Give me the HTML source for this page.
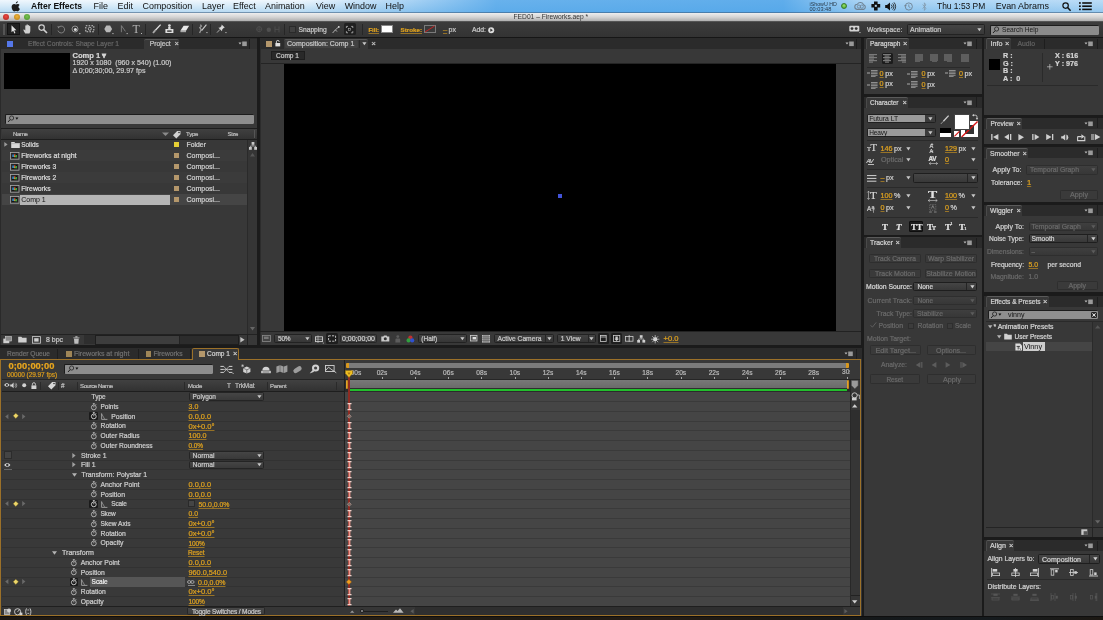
<!DOCTYPE html>
<html><head><meta charset="utf-8"><title>After Effects</title>
<style>
html,body{margin:0;padding:0;}
body{width:1103px;height:620px;overflow:hidden;background:#1b1b1b;position:relative;font-family:"Liberation Sans",sans-serif;}
div,span.t,svg{position:absolute;}
span.t{white-space:nowrap;-webkit-text-stroke:0.22px;}
svg{overflow:visible;}
#root{left:0;top:0;width:1103px;height:620px;will-change:transform;}
</style></head><body><div id="root">
<div style="left:0px;top:616px;width:1103px;height:4px;background:linear-gradient(90deg,#1c1712,#261e15 10%,#1a1611 22%,#271f15 35%,#1f1a13 48%,#241c14 60%,#1c1913 70%,#14181a 80%,#161b1e 90%,#1c1813 100%);"></div>
<div style="left:0px;top:616px;width:1103px;height:1px;background:#0e0e0e;"></div>
<div style="left:0px;top:0px;width:1103px;height:12.5px;background:linear-gradient(180deg,#f0f7fd 0%,#d6eaf8 45%,#b4d8f2 100%);"></div>
<div style="left:0px;top:0px;width:1103px;height:12.5px;background:linear-gradient(90deg,rgba(70,160,232,0) 0%,rgba(70,160,232,0) 27%,rgba(70,160,232,.35) 36%,rgba(70,160,232,.8) 45%,rgba(70,160,232,.85) 71%,rgba(70,160,232,.4) 78%,rgba(70,160,232,.3) 100%);"></div>
<div style="left:0px;top:12px;width:1103px;height:0.6px;background:rgba(60,90,120,.55);"></div>
<svg style="left:10.5px;top:0.8px;" width="10" height="11" viewBox="0 0 10 11"><path d="M6.9 0.2C6.9 1.4 5.9 2.5 4.8 2.4C4.7 1.3 5.8 0.2 6.9 0.2ZM8.6 3.9C7.9 4.3 7.5 5 7.5 5.8C7.5 6.8 8.1 7.5 8.9 7.8C8.5 9 7.6 10.4 6.7 10.4C6 10.4 5.7 10 4.9 10C4.1 10 3.7 10.4 3.1 10.4C2.1 10.4 0.6 8.2 0.6 6.1C0.6 4.1 1.9 3 3.1 3C3.9 3 4.5 3.5 5 3.5C5.5 3.5 6.2 2.9 7.1 3C7.6 3 8.2 3.3 8.6 3.9Z" fill="#1c1c1c"/></svg>
<span class="t" style="left:31px;top:0.05px;line-height:12px;font-size:8.58px;color:#111;font-weight:bold;-webkit-text-stroke:0;">After Effects</span>
<span class="t" style="left:93.5px;top:0.05px;line-height:12px;font-size:8.95px;color:#111;-webkit-text-stroke:0;">File</span>
<span class="t" style="left:117.5px;top:0.05px;line-height:12px;font-size:8.95px;color:#111;-webkit-text-stroke:0;">Edit</span>
<span class="t" style="left:142.5px;top:0.05px;line-height:12px;font-size:8.95px;color:#111;-webkit-text-stroke:0;">Composition</span>
<span class="t" style="left:202px;top:0.05px;line-height:12px;font-size:8.95px;color:#111;-webkit-text-stroke:0;">Layer</span>
<span class="t" style="left:233px;top:0.05px;line-height:12px;font-size:8.95px;color:#111;-webkit-text-stroke:0;">Effect</span>
<span class="t" style="left:265px;top:0.05px;line-height:12px;font-size:8.95px;color:#111;-webkit-text-stroke:0;">Animation</span>
<span class="t" style="left:316px;top:0.05px;line-height:12px;font-size:8.95px;color:#111;-webkit-text-stroke:0;">View</span>
<span class="t" style="left:344.7px;top:0.05px;line-height:12px;font-size:8.95px;color:#111;-webkit-text-stroke:0;">Window</span>
<span class="t" style="left:385.5px;top:0.05px;line-height:12px;font-size:8.95px;color:#111;-webkit-text-stroke:0;">Help</span>
<span class="t" style="left:937px;top:0.05px;line-height:12px;font-size:8.44px;color:#111;-webkit-text-stroke:0;">Thu 1:53 PM</span>
<span class="t" style="left:995.7px;top:0.05px;line-height:12px;font-size:8.96px;color:#111;-webkit-text-stroke:0;">Evan Abrams</span>
<span class="t" style="left:809.5px;top:0.55px;line-height:6px;font-size:5.3px;color:#2a3a4a;-webkit-text-stroke:0;">iShowU HD</span>
<span class="t" style="left:809.5px;top:5.85px;line-height:6px;font-size:5.6px;color:#2a3a4a;-webkit-text-stroke:0;">00:03:48</span>
<div style="left:841px;top:3.2px;width:6px;height:6px;background:radial-gradient(circle at 50% 35%,#9be06a,#3fa52c);border-radius:50%;border:0.5px solid #3a7a2a;box-sizing:border-box;"></div>
<svg style="left:853.6px;top:2.4px;" width="13" height="8" viewBox="0 0 13 8"><path d="M3.4 7.4a2.6 2.6 0 0 1 0-5.2 3.4 3.4 0 0 1 6.2 0.6 2.4 2.4 0 0 1 0 4.6z" fill="none" stroke="#6f8293" stroke-width="1.1"/><circle cx="5" cy="4.6" r="1.6" fill="none" stroke="#6f8293" stroke-width="0.8"/><circle cx="7.8" cy="4.6" r="1.6" fill="none" stroke="#6f8293" stroke-width="0.8"/></svg>
<svg style="left:870.6px;top:1.4px;" width="10" height="10" viewBox="0 0 10 10"><path d="M3 0.4h3.6v2.6h2.6v3.6H6.6v2.8H3V6.6H0.4V3H3z" fill="#111"/><rect x="3.8" y="3.8" width="2" height="2" fill="#b8d8f0"/></svg>
<svg style="left:884.6px;top:1.8px;" width="11.4" height="9" viewBox="0 0 11.4 9"><path d="M0.2 3h1.8L5 0.6v7.8L2 6H0.2z" fill="#111"/><path d="M6.2 2.6a2.6 2.6 0 0 1 0 3.8M7.6 1.4a4.4 4.4 0 0 1 0 6.2M9 0.4a6 6 0 0 1 0 8.2" stroke="#111" stroke-width="0.8" fill="none"/></svg>
<svg style="left:903.6px;top:1.8px;" width="9.4" height="9" viewBox="0 0 9.4 9"><circle cx="4.8" cy="4.5" r="3.6" fill="none" stroke="#6f8293" stroke-width="0.9"/><path d="M4.8 2.4v2.3l1.6 1" stroke="#6f8293" stroke-width="0.8" fill="none"/><path d="M0 3l1.4 1.8L3 3.4z" fill="#6f8293"/></svg>
<svg style="left:921.6px;top:1.6px;" width="5" height="9.4" viewBox="0 0 5 9.4"><path d="M0.6 2.6L4 6.2 2.4 8.4V0.8L4 3 0.6 6.6" stroke="#7f93a5" stroke-width="0.7" fill="none"/></svg>
<svg style="left:1061.5px;top:1.6px;" width="9.4" height="9.4" viewBox="0 0 9.4 9.4"><circle cx="3.6" cy="3.6" r="2.7" fill="none" stroke="#111" stroke-width="1.2"/><path d="M5.6 5.6L8.6 8.8" stroke="#111" stroke-width="1.5"/></svg>
<svg style="left:1078.6px;top:2px;" width="13" height="8.4" viewBox="0 0 13 8.4"><rect x="0" y="0.2" width="1.8" height="1.6" fill="#111"/><rect x="3.2" y="0.2" width="9.6" height="1.6" fill="#111"/><rect x="0" y="3.4" width="1.8" height="1.6" fill="#111"/><rect x="3.2" y="3.4" width="9.6" height="1.6" fill="#111"/><rect x="0" y="6.6" width="1.8" height="1.6" fill="#111"/><rect x="3.2" y="6.6" width="9.6" height="1.6" fill="#111"/></svg>
<div style="left:0px;top:12.5px;width:1103px;height:9px;background:linear-gradient(180deg,#eeeeee 0%,#d4d4d4 45%,#b0b0b0 88%,#8a8a8a 100%);"></div>
<div style="left:3.3px;top:13.8px;width:6px;height:6px;background:radial-gradient(circle at 50% 40%,#ee4a42,#a8221c);border-radius:50%;"></div>
<div style="left:13.899999999999999px;top:13.8px;width:6px;height:6px;background:radial-gradient(circle at 50% 40%,#f0b236,#b07c18);border-radius:50%;"></div>
<div style="left:24.2px;top:13.8px;width:6px;height:6px;background:radial-gradient(circle at 50% 40%,#78c250,#4a8f2a);border-radius:50%;"></div>
<span class="t" style="left:513.5px;top:11.25px;line-height:12px;font-size:6.69px;color:#333;-webkit-text-stroke:0;">FED01 – Fireworks.aep *</span>
<div style="left:0px;top:21.5px;width:1103px;height:15.5px;background:linear-gradient(180deg,#3c3c3c,#333333);"></div>
<div style="left:0px;top:21.3px;width:1103px;height:0.7px;background:#555;"></div>
<div style="left:0px;top:36.8px;width:1103px;height:1.2px;background:#161616;"></div>
<div style="left:0px;top:38px;width:257px;height:306.5px;background:#383838;"></div>
<div style="left:0px;top:38px;width:257px;height:11px;background:#2b2b2b;"></div>
<div style="left:259.5px;top:38px;width:601.5px;height:306.5px;background:#383838;"></div>
<div style="left:259.5px;top:38px;width:601.5px;height:11px;background:#2b2b2b;"></div>
<div style="left:0px;top:347.8px;width:861.5px;height:268.7px;background:#383838;"></div>
<div style="left:0px;top:347.8px;width:861.5px;height:11px;background:#2b2b2b;"></div>
<div style="left:863.7px;top:38px;width:118.2px;height:55.9px;background:#383838;"></div>
<div style="left:863.7px;top:38px;width:118.2px;height:11px;background:#2b2b2b;"></div>
<div style="left:863.7px;top:96.8px;width:118.2px;height:138px;background:#383838;"></div>
<div style="left:863.7px;top:96.8px;width:118.2px;height:11px;background:#2b2b2b;"></div>
<div style="left:863.7px;top:237px;width:118.2px;height:379.3px;background:#383838;"></div>
<div style="left:863.7px;top:237px;width:118.2px;height:11px;background:#2b2b2b;"></div>
<div style="left:984.3px;top:38px;width:118.7px;height:76.9px;background:#383838;"></div>
<div style="left:984.3px;top:38px;width:118.7px;height:11px;background:#2b2b2b;"></div>
<div style="left:984.3px;top:117.8px;width:118.7px;height:26.7px;background:#383838;"></div>
<div style="left:984.3px;top:117.8px;width:118.7px;height:11px;background:#2b2b2b;"></div>
<div style="left:984.3px;top:147.4px;width:118.7px;height:54.6px;background:#383838;"></div>
<div style="left:984.3px;top:147.4px;width:118.7px;height:11px;background:#2b2b2b;"></div>
<div style="left:984.3px;top:204.8px;width:118.7px;height:87.7px;background:#383838;"></div>
<div style="left:984.3px;top:204.8px;width:118.7px;height:11px;background:#2b2b2b;"></div>
<div style="left:984.3px;top:296px;width:118.7px;height:240.7px;background:#383838;"></div>
<div style="left:984.3px;top:296px;width:118.7px;height:11px;background:#2b2b2b;"></div>
<div style="left:984.3px;top:540px;width:118.7px;height:76.3px;background:#383838;"></div>
<div style="left:984.3px;top:540px;width:118.7px;height:11px;background:#2b2b2b;"></div>
<div style="left:6.8px;top:41px;width:6.2px;height:6.2px;background:#5577e8;"></div>
<span class="t" style="left:28px;top:38.05px;line-height:12px;font-size:6.69px;color:#666;">Effect Controls: Shape Layer 1</span>
<div style="left:144px;top:38.5px;width:35px;height:11px;background:#383838;border-top:0.6px solid #555;border-radius:2px 2px 0 0;"></div>
<span class="t" style="left:149.7px;top:38.05px;line-height:12px;font-size:6.75px;color:#c6c6c6;">Project</span>
<span class="t" style="left:174.4px;top:37.85px;line-height:12px;font-size:7.5px;color:#c6c6c6;">×</span>
<svg style="left:238px;top:41px;" width="10" height="6" viewBox="0 0 10 6"><path d="M0.5 1.5h3l-1.5 2z" fill="#bbb"/><rect x="4.2" y="0.5" width="4.6" height="4.6" fill="#9a9a9a"/></svg>
<div style="left:249.3px;top:38.5px;width:7.7px;height:10.5px;background:#323232;"></div>
<div style="left:248.5px;top:38.5px;width:0.8px;height:10px;background:#1e1e1e;"></div>
<div style="left:4px;top:52.7px;width:65.5px;height:36.6px;background:#000;"></div>
<span class="t" style="left:72.5px;top:49.85px;line-height:12px;font-size:7.6px;color:#d6d6d6;font-weight:bold;">Comp 1 ▾</span>
<span class="t" style="left:72.5px;top:57.45px;line-height:12px;font-size:7.07px;color:#c8c8c8;white-space:pre;">1920 x 1080  (960 x 540) (1.00)</span>
<span class="t" style="left:72.5px;top:64.85px;line-height:12px;font-size:7.1px;color:#c8c8c8;">Δ 0;00;30;00, 29.97 fps</span>
<div style="left:4.6px;top:113.6px;width:249px;height:10px;background:#8d8d8d;border-top:1px solid #1c1c1c;border-left:1px solid #1c1c1c;border-radius:1.5px;box-sizing:border-box;"></div>
<svg style="left:7px;top:115px;" width="12" height="8" viewBox="0 0 12 8"><circle cx="4.6" cy="3" r="2.1" fill="none" stroke="#222" stroke-width="0.8"/><path d="M3.2 4.6L1 7" stroke="#222" stroke-width="1"/><path d="M8.4 2.6h3l-1.5 2.2z" fill="#111"/></svg>
<div style="left:1.5px;top:129px;width:255.5px;height:10.3px;background:linear-gradient(180deg,#404040,#323232);"></div>
<div style="left:0px;top:128.3px;width:257px;height:0.8px;background:#1d1d1d;"></div>
<div style="left:0px;top:139.3px;width:257px;height:0.9px;background:#1d1d1d;"></div>
<span class="t" style="left:13px;top:127.95px;line-height:12px;font-size:6.0px;color:#bdbdbd;letter-spacing:-0.376px;">Name</span>
<svg style="left:162px;top:131.5px;" width="8" height="5" viewBox="0 0 8 5"><path d="M0 0.5h7l-3.5 3.6z" fill="#8a8a8a"/></svg>
<svg style="left:172px;top:129.8px;" width="10" height="9" viewBox="0 0 10 9"><path d="M1 5.2L5.2 1h3.3v3.3L4.3 8.5z" fill="#d0d0d0"/><circle cx="7" cy="2.5" r="0.8" fill="#333"/></svg>
<span class="t" style="left:186px;top:127.95px;line-height:12px;font-size:6.0px;color:#bdbdbd;letter-spacing:-0.202px;">Type</span>
<span class="t" style="left:227.5px;top:127.95px;line-height:12px;font-size:6.0px;color:#bdbdbd;letter-spacing:-0.293px;">Size</span>
<div style="left:253.5px;top:130px;width:0.8px;height:8px;background:#555;"></div>
<div style="left:246.8px;top:140px;width:0.9px;height:194px;background:#2a2a2a;"></div>
<div style="left:247.7px;top:140px;width:9.3px;height:194px;background:#353535;"></div>
<svg style="left:248.5px;top:141.5px;" width="8" height="8" viewBox="0 0 8 8"><rect x="2.6" y="0" width="2.8" height="2.8" fill="#c8c8c8"/><rect x="0" y="5" width="2.8" height="2.8" fill="#c8c8c8"/><rect x="5.2" y="5" width="2.8" height="2.8" fill="#c8c8c8"/><path d="M4 2.8V4M1.4 5V4H6.6V5" stroke="#c8c8c8" stroke-width="0.7" fill="none"/></svg>
<svg style="left:249.5px;top:152.5px;" width="6" height="4" viewBox="0 0 6 4"><path d="M0 3.5h5L2.5 0z" fill="#555"/></svg>
<svg style="left:249.5px;top:327px;" width="6" height="4" viewBox="0 0 6 4"><path d="M0 0h5L2.5 3.5z" fill="#666"/></svg>
<svg style="left:4px;top:142.20000000000002px;" width="4" height="5" viewBox="0 0 4 5"><path d="M0.3 0L3.6 2.4L0.3 4.8z" fill="#9a9a9a"/></svg>
<svg style="left:10.5px;top:141.20000000000002px;" width="9" height="7.4" viewBox="0 0 9 7.4"><path d="M0.2 1h3.2l0.8 1h4.6v5H0.2z" fill="#d8d8d8"/><path d="M0.2 2.6h8.6" stroke="#999" stroke-width="0.5"/></svg>
<span class="t" style="left:21.2px;top:139.25px;line-height:12px;font-size:6.5px;color:#dadada;letter-spacing:-0.034px;">Solids</span>
<div style="left:174px;top:142.10000000000002px;width:5.4px;height:5.4px;background:#e6cf35;"></div>
<span class="t" style="left:186.5px;top:139.25px;line-height:12px;font-size:6.88px;color:#d0d0d0;">Folder</span>
<div style="left:1.5px;top:150.3px;width:245.3px;height:11px;background:#3b3b3b;"></div>
<svg style="left:10.3px;top:152.0px;" width="9.4" height="7.6" viewBox="0 0 9.4 7.6"><rect x="0.4" y="0.4" width="8.6" height="6.8" fill="#2a2a2a" stroke="#aaa" stroke-width="0.8"/><rect x="2" y="1.8" width="5.4" height="4" fill="#111"/><rect x="2.3" y="2.4" width="1.6" height="2.6" fill="#3a8fd0"/><rect x="4" y="2.2" width="1.5" height="2.2" fill="#d04a2a"/><rect x="5.4" y="3" width="1.6" height="2.4" fill="#3aa84a"/><rect x="4.2" y="3.8" width="1.2" height="1.4" fill="#d8c030"/></svg>
<span class="t" style="left:21.2px;top:150.25px;line-height:12px;font-size:7.03px;color:#dadada;">Fireworks at night</span>
<div style="left:174px;top:153.10000000000002px;width:5.4px;height:5.4px;background:#b4976b;"></div>
<span class="t" style="left:186.5px;top:150.25px;line-height:12px;font-size:7.01px;color:#d0d0d0;">Composi...</span>
<svg style="left:10.3px;top:163.0px;" width="9.4" height="7.6" viewBox="0 0 9.4 7.6"><rect x="0.4" y="0.4" width="8.6" height="6.8" fill="#2a2a2a" stroke="#aaa" stroke-width="0.8"/><rect x="2" y="1.8" width="5.4" height="4" fill="#111"/><rect x="2.3" y="2.4" width="1.6" height="2.6" fill="#3a8fd0"/><rect x="4" y="2.2" width="1.5" height="2.2" fill="#d04a2a"/><rect x="5.4" y="3" width="1.6" height="2.4" fill="#3aa84a"/><rect x="4.2" y="3.8" width="1.2" height="1.4" fill="#d8c030"/></svg>
<span class="t" style="left:21.2px;top:161.25px;line-height:12px;font-size:6.77px;color:#dadada;">Fireworks 3</span>
<div style="left:174px;top:164.10000000000002px;width:5.4px;height:5.4px;background:#b4976b;"></div>
<span class="t" style="left:186.5px;top:161.25px;line-height:12px;font-size:7.01px;color:#d0d0d0;">Composi...</span>
<div style="left:1.5px;top:172.3px;width:245.3px;height:11px;background:#3b3b3b;"></div>
<svg style="left:10.3px;top:174.0px;" width="9.4" height="7.6" viewBox="0 0 9.4 7.6"><rect x="0.4" y="0.4" width="8.6" height="6.8" fill="#2a2a2a" stroke="#aaa" stroke-width="0.8"/><rect x="2" y="1.8" width="5.4" height="4" fill="#111"/><rect x="2.3" y="2.4" width="1.6" height="2.6" fill="#3a8fd0"/><rect x="4" y="2.2" width="1.5" height="2.2" fill="#d04a2a"/><rect x="5.4" y="3" width="1.6" height="2.4" fill="#3aa84a"/><rect x="4.2" y="3.8" width="1.2" height="1.4" fill="#d8c030"/></svg>
<span class="t" style="left:21.2px;top:172.25px;line-height:12px;font-size:6.77px;color:#dadada;">Fireworks 2</span>
<div style="left:174px;top:175.10000000000002px;width:5.4px;height:5.4px;background:#b4976b;"></div>
<span class="t" style="left:186.5px;top:172.25px;line-height:12px;font-size:7.01px;color:#d0d0d0;">Composi...</span>
<svg style="left:10.3px;top:185.0px;" width="9.4" height="7.6" viewBox="0 0 9.4 7.6"><rect x="0.4" y="0.4" width="8.6" height="6.8" fill="#2a2a2a" stroke="#aaa" stroke-width="0.8"/><rect x="2" y="1.8" width="5.4" height="4" fill="#111"/><rect x="2.3" y="2.4" width="1.6" height="2.6" fill="#3a8fd0"/><rect x="4" y="2.2" width="1.5" height="2.2" fill="#d04a2a"/><rect x="5.4" y="3" width="1.6" height="2.4" fill="#3aa84a"/><rect x="4.2" y="3.8" width="1.2" height="1.4" fill="#d8c030"/></svg>
<span class="t" style="left:21.2px;top:183.25px;line-height:12px;font-size:6.81px;color:#dadada;">Fireworks</span>
<div style="left:174px;top:186.10000000000002px;width:5.4px;height:5.4px;background:#b4976b;"></div>
<span class="t" style="left:186.5px;top:183.25px;line-height:12px;font-size:7.01px;color:#d0d0d0;">Composi...</span>
<div style="left:1.5px;top:194.3px;width:245.3px;height:11px;background:#3b3b3b;"></div>
<div style="left:1.5px;top:194.4px;width:245.3px;height:10.8px;background:#454545;"></div>
<div style="left:20px;top:194.60000000000002px;width:150px;height:10.4px;background:#b5b5b5;"></div>
<svg style="left:10.3px;top:196.0px;" width="9.4" height="7.6" viewBox="0 0 9.4 7.6"><rect x="0.4" y="0.4" width="8.6" height="6.8" fill="#2a2a2a" stroke="#aaa" stroke-width="0.8"/><rect x="2" y="1.8" width="5.4" height="4" fill="#111"/><rect x="2.3" y="2.4" width="1.6" height="2.6" fill="#3a8fd0"/><rect x="4" y="2.2" width="1.5" height="2.2" fill="#d04a2a"/><rect x="5.4" y="3" width="1.6" height="2.4" fill="#3aa84a"/><rect x="4.2" y="3.8" width="1.2" height="1.4" fill="#d8c030"/></svg>
<span class="t" style="left:21.2px;top:194.25px;line-height:12px;font-size:7.0px;color:#111;-webkit-text-stroke:0;">Comp 1</span>
<div style="left:174px;top:197.10000000000002px;width:5.4px;height:5.4px;background:#b4976b;"></div>
<span class="t" style="left:186.5px;top:194.25px;line-height:12px;font-size:7.01px;color:#d0d0d0;">Composi...</span>
<div style="left:0px;top:334px;width:257px;height:10.5px;background:#383838;"></div>
<div style="left:0px;top:333.6px;width:257px;height:0.7px;background:#222;"></div>
<svg style="left:3px;top:336px;" width="9" height="8" viewBox="0 0 9 8"><rect x="0.3" y="2.6" width="6" height="4.6" fill="#cfcfcf"/><rect x="2.4" y="0.6" width="6" height="4.4" fill="#8a8a8a" stroke="#cfcfcf" stroke-width="0.6"/></svg>
<svg style="left:18px;top:336.4px;" width="9" height="7" viewBox="0 0 9 7"><path d="M0.2 0.8h3.2l0.8 1h4.4v4.8H0.2z" fill="#cfcfcf"/></svg>
<svg style="left:32px;top:336px;" width="9" height="8" viewBox="0 0 9 8"><rect x="0.4" y="0.6" width="8" height="6.6" fill="none" stroke="#cfcfcf" stroke-width="0.8"/><rect x="2.2" y="2.2" width="4.4" height="3.4" fill="#cfcfcf"/></svg>
<span class="t" style="left:46px;top:334.25px;line-height:12px;font-size:6.95px;color:#c8c8c8;">8 bpc</span>
<svg style="left:72.5px;top:335.8px;" width="7" height="8.4" viewBox="0 0 7 8.4"><path d="M0.3 1.4h6.2v0.9H0.3zM2.3 0.3h2.2v0.9H2.3zM1 2.8h4.8l-0.4 5H1.4z" fill="#bdbdbd"/></svg>
<svg style="left:86.5px;top:337.2px;" width="5" height="6" viewBox="0 0 5 6"><path d="M4.6 0v5.4L0.3 2.7z" fill="#c0c0c0"/></svg>
<div style="left:83.5px;top:334.6px;width:11.5px;height:9.9px;background:#2e2e2e;"></div>
<div style="left:95px;top:335px;width:143.5px;height:9.5px;background:#2c2c2c;border:0.7px solid #1e1e1e;box-sizing:border-box;"></div>
<div style="left:95.5px;top:335.6px;width:83px;height:8.3px;background:#3d3d3d;border-right:0.7px solid #222;"></div>
<svg style="left:239.5px;top:337.2px;" width="5" height="6" viewBox="0 0 5 6"><path d="M0.3 0v5.4L4.6 2.7z" fill="#c0c0c0"/></svg>
<div style="left:247px;top:334px;width:0.8px;height:10.5px;background:#222;"></div>
<div style="left:0px;top:38px;width:1.3px;height:306.5px;background:#2a2a2a;"></div>
<div style="left:259.5px;top:38px;width:1.6px;height:306.5px;background:#2c2c2c;"></div>
<div style="left:266.2px;top:41.1px;width:6px;height:5.6px;background:#b4976b;"></div>
<svg style="left:275.4px;top:40.4px;" width="6" height="7" viewBox="0 0 6 7"><path d="M1.4 3V1.8a1.4 1.4 0 0 1 2.8 0" stroke="#d8d8d8" stroke-width="0.9" fill="none"/><rect x="0.4" y="3" width="4.8" height="3.4" fill="#e0e0e0"/></svg>
<div style="left:283.8px;top:38.8px;width:84.7px;height:10.2px;background:#383838;border-top:0.6px solid #565656;border-radius:2px 2px 0 0;"></div>
<div style="left:284.8px;top:39.8px;width:73px;height:8.4px;background:#424242;border-radius:1.5px;"></div>
<span class="t" style="left:287px;top:38.15px;line-height:12px;font-size:7.0px;color:#c6c6c6;">Composition: Comp 1</span>
<div style="left:358.6px;top:40px;width:0.7px;height:8px;background:#2a2a2a;"></div>
<svg style="left:361.6px;top:42.2px;" width="5" height="4" viewBox="0 0 5 4"><path d="M0.3 0.3h4.2L2.4 3.2z" fill="#c8c8c8"/></svg>
<span class="t" style="left:371.2px;top:37.95px;line-height:12px;font-size:8px;color:#c6c6c6;">×</span>
<svg style="left:845px;top:41px;" width="10" height="6" viewBox="0 0 10 6"><path d="M0.5 1.5h3l-1.5 2z" fill="#bbb"/><rect x="4.2" y="0.5" width="4.6" height="4.6" fill="#9a9a9a"/></svg>
<div style="left:855.5px;top:38.5px;width:0.8px;height:10px;background:#1e1e1e;"></div>
<div style="left:271.3px;top:51.4px;width:33.5px;height:8.4px;background:#292929;border:0.6px solid #1e1e1e;box-sizing:border-box;"></div>
<span class="t" style="left:276px;top:50.05px;line-height:12px;font-size:6.57px;color:#c6c6c6;">Comp 1</span>
<div style="left:261px;top:62.8px;width:600px;height:0.8px;background:#242424;"></div>
<div style="left:284.3px;top:63.5px;width:551.4px;height:267.8px;background:#000;"></div>
<div style="left:557.8px;top:194px;width:4.4px;height:4.4px;background:#4253d8;"></div>
<div style="left:259.5px;top:331.3px;width:601.5px;height:0.9px;background:#222;"></div>
<div style="left:261.1px;top:332.2px;width:600px;height:12.3px;background:#383838;"></div>
<svg style="left:262px;top:335px;" width="9" height="7" viewBox="0 0 9 7"><rect x="0.4" y="0.4" width="8" height="6" fill="#444" stroke="#8a8a8a" stroke-width="0.8"/><rect x="2" y="1.6" width="4.6" height="2.4" fill="#777"/></svg>
<div style="left:273.5px;top:334px;width:38.5px;height:9.4px;background:linear-gradient(180deg,#424242,#363636);border:0.6px solid #222;box-sizing:border-box;border-radius:1.5px;"></div>
<span class="t" style="left:278px;top:333.05px;line-height:12px;font-size:6.5px;color:#c8c8c8;letter-spacing:-0.236px;">50%</span>
<svg style="left:305.0px;top:337.09999999999997px;" width="5" height="4" viewBox="0 0 5 4"><path d="M0.3 0.3h4.2L2.4 3.2z" fill="#c8c8c8"/></svg>
<svg style="left:315px;top:334.6px;" width="9" height="9" viewBox="0 0 9 9"><rect x="0.5" y="1.8" width="7" height="4.8" fill="none" stroke="#ccc" stroke-width="0.9"/><path d="M3 0.4v7.6M0 4.2h8" stroke="#ccc" stroke-width="0.6"/><rect x="7.8" y="7.6" width="1" height="1" fill="#bbb"/></svg>
<div style="left:326px;top:333.4px;width:11.6px;height:10.6px;background:#1e1e1e;border-radius:1.5px;"></div>
<svg style="left:327.6px;top:335.2px;" width="8.4" height="7" viewBox="0 0 8.4 7"><rect x="0.6" y="0.8" width="7" height="5.4" fill="none" stroke="#d0d0d0" stroke-width="0.9" stroke-dasharray="2.2 1.2"/></svg>
<div style="left:340px;top:334px;width:37.4px;height:9.4px;background:#3e3e3e;border:0.6px solid #262626;box-sizing:border-box;border-radius:1.5px;"></div>
<span class="t" style="left:342px;top:333.05px;line-height:12px;font-size:6.98px;color:#cfcfcf;">0;00;00;00</span>
<svg style="left:381px;top:335.2px;" width="9" height="7" viewBox="0 0 9 7"><path d="M0.3 1.4h2l0.7-1h2.6l0.7 1h2v5H0.3z" fill="#c8c8c8"/><circle cx="4.3" cy="3.8" r="1.5" fill="#333"/></svg>
<svg style="left:394.6px;top:335px;" width="6" height="8" viewBox="0 0 6 8"><circle cx="2.8" cy="1.6" r="1.4" fill="#5c5c5c"/><path d="M0.4 7.4V4.4a1 1 0 0 1 1-1h2.8a1 1 0 0 1 1 1v3z" fill="#5c5c5c"/></svg>
<svg style="left:405.5px;top:334.6px;" width="9" height="8.4" viewBox="0 0 9 8.4"><circle cx="4.4" cy="2.6" r="2.1" fill="#c03030"/><circle cx="2.6" cy="5.4" r="2.1" fill="#30a040"/><circle cx="6.2" cy="5.4" r="2.1" fill="#3050d0"/></svg>
<div style="left:418px;top:334px;width:48.5px;height:9.4px;background:linear-gradient(180deg,#424242,#363636);border:0.6px solid #222;box-sizing:border-box;border-radius:1.5px;"></div>
<span class="t" style="left:421.3px;top:333.05px;line-height:12px;font-size:6.55px;color:#c8c8c8;">(Half)</span>
<svg style="left:459.5px;top:337.09999999999997px;" width="5" height="4" viewBox="0 0 5 4"><path d="M0.3 0.3h4.2L2.4 3.2z" fill="#c8c8c8"/></svg>
<svg style="left:470px;top:335.4px;" width="8" height="6.6" viewBox="0 0 8 6.6"><rect x="0.4" y="0.4" width="6.6" height="5.6" fill="#555" stroke="#ccc" stroke-width="0.8"/><rect x="2.6" y="2" width="3.4" height="2.4" fill="#ddd"/></svg>
<svg style="left:482px;top:334.8px;" width="8.4" height="8" viewBox="0 0 8.4 8"><rect x="0" y="0" width="8" height="7.6" fill="#bbb"/><path d="M0 1.9h8M0 3.8h8M0 5.7h8M2 0v7.6M4 0v7.6M6 0v7.6" stroke="#555" stroke-width="0.7"/></svg>
<div style="left:493.6px;top:334px;width:60.2px;height:9.4px;background:linear-gradient(180deg,#424242,#363636);border:0.6px solid #222;box-sizing:border-box;border-radius:1.5px;"></div>
<span class="t" style="left:497.5px;top:333.05px;line-height:12px;font-size:6.69px;color:#c8c8c8;">Active Camera</span>
<svg style="left:546.8000000000001px;top:337.09999999999997px;" width="5" height="4" viewBox="0 0 5 4"><path d="M0.3 0.3h4.2L2.4 3.2z" fill="#c8c8c8"/></svg>
<div style="left:545.2px;top:335px;width:0.6px;height:7.4px;background:#262626;"></div>
<div style="left:556.8px;top:334px;width:38.9px;height:9.4px;background:linear-gradient(180deg,#424242,#363636);border:0.6px solid #222;box-sizing:border-box;border-radius:1.5px;"></div>
<span class="t" style="left:560.8px;top:333.05px;line-height:12px;font-size:6.67px;color:#c8c8c8;">1 View</span>
<svg style="left:588.6999999999999px;top:337.09999999999997px;" width="5" height="4" viewBox="0 0 5 4"><path d="M0.3 0.3h4.2L2.4 3.2z" fill="#c8c8c8"/></svg>
<div style="left:587.6px;top:335px;width:0.6px;height:7.4px;background:#262626;"></div>
<div style="left:598px;top:333.4px;width:10.6px;height:10.6px;background:#1e1e1e;border-radius:1.5px;"></div>
<svg style="left:600px;top:335px;" width="7" height="7.4" viewBox="0 0 7 7.4"><rect x="0.4" y="0.4" width="5.8" height="6.2" fill="none" stroke="#ccc" stroke-width="0.8"/><path d="M0.4 2h5.8" stroke="#ccc" stroke-width="0.8"/></svg>
<div style="left:610.8px;top:333.4px;width:10.8px;height:10.6px;background:#1e1e1e;border-radius:1.5px;"></div>
<svg style="left:612.6px;top:335px;" width="7.4" height="7.4" viewBox="0 0 7.4 7.4"><rect x="0.4" y="0.4" width="6.4" height="6.2" fill="none" stroke="#ccc" stroke-width="0.8"/><path d="M2.4 1.6h2.4v2.2h1.2L3.6 6 1.4 3.8h1z" fill="#ccc"/></svg>
<svg style="left:624.6px;top:335.4px;" width="9" height="7" viewBox="0 0 9 7"><rect x="0.4" y="1.4" width="7.6" height="4.8" fill="none" stroke="#ccc" stroke-width="0.8"/><path d="M4.2 0.2v6.6" stroke="#ccc" stroke-width="0.9"/></svg>
<svg style="left:637.4px;top:334.8px;" width="8.4" height="8" viewBox="0 0 8.4 8"><rect x="2.8" y="0.2" width="2.8" height="2.6" fill="#d0d0d0"/><rect x="0.2" y="5" width="2.8" height="2.6" fill="#d0d0d0"/><rect x="5.4" y="5" width="2.8" height="2.6" fill="#d0d0d0"/><path d="M4.2 2.8V4M1.6 5V4H6.8V5" stroke="#d0d0d0" stroke-width="0.7" fill="none"/></svg>
<svg style="left:651px;top:334.6px;" width="9" height="9" viewBox="0 0 9 9"><circle cx="4.2" cy="4.2" r="2" fill="#e0e0e0"/><path d="M4.2 0v8.4M0 4.2h8.4M1.2 1.2l6 6M7.2 1.2l-6 6" stroke="#d0d0d0" stroke-width="0.7"/></svg>
<span class="t" style="left:663.5px;top:333.15px;line-height:12px;font-size:7.6px;color:#dfa21f;text-decoration:underline;text-decoration-color:rgba(215,155,30,.6);text-underline-offset:0.8px;">+0.0</span>
<span class="t" style="left:7px;top:348.05px;line-height:12px;font-size:6.56px;color:#707070;">Render Queue</span>
<div style="left:57.3px;top:349px;width:0.8px;height:10px;background:#1e1e1e;"></div>
<div style="left:66px;top:351px;width:5.6px;height:5.6px;background:#a08657;"></div>
<span class="t" style="left:74px;top:348.05px;line-height:12px;font-size:7.03px;color:#707070;">Fireworks at night</span>
<div style="left:137.8px;top:349px;width:0.8px;height:10px;background:#1e1e1e;"></div>
<div style="left:145.5px;top:351px;width:5.6px;height:5.6px;background:#a08657;"></div>
<span class="t" style="left:153.5px;top:348.05px;line-height:12px;font-size:6.69px;color:#707070;">Fireworks</span>
<div style="left:190px;top:349px;width:0.8px;height:10px;background:#1e1e1e;"></div>
<div style="left:0px;top:358.6px;width:861.2px;height:257.8px;border:1px solid #9c7129;box-sizing:border-box;"></div>
<div style="left:192px;top:348.4px;width:46.6px;height:11.5px;background:#383838;border:1px solid #9c7129;border-bottom:none;box-sizing:border-box;border-radius:2px 2px 0 0;"></div>
<div style="left:198.5px;top:351px;width:6px;height:5.8px;background:#b4976b;"></div>
<span class="t" style="left:207px;top:348.15px;line-height:12px;font-size:6.57px;color:#d0d0d0;">Comp 1</span>
<span class="t" style="left:233px;top:347.85px;line-height:12px;font-size:7.5px;color:#d0d0d0;">×</span>
<svg style="left:844px;top:351px;" width="10" height="6" viewBox="0 0 10 6"><path d="M0.5 1.5h3l-1.5 2z" fill="#bbb"/><rect x="4.2" y="0.5" width="4.6" height="4.6" fill="#9a9a9a"/></svg>
<div style="left:855.5px;top:348.5px;width:0.8px;height:10px;background:#1e1e1e;"></div>
<span class="t" style="left:8.5px;top:360.45px;line-height:12px;font-size:9.4px;color:#e8a61e;font-weight:bold;">0;00;00;00</span>
<span class="t" style="left:7px;top:368.85px;line-height:12px;font-size:6.5px;color:#d89a1c;letter-spacing:-0.056px;">00000 (29.97 fps)</span>
<div style="left:64px;top:364px;width:148.6px;height:10.2px;background:#8d8d8d;border-top:1px solid #1c1c1c;border-left:1px solid #1c1c1c;border-radius:1.5px;box-sizing:border-box;"></div>
<svg style="left:66.5px;top:365.4px;" width="12" height="8" viewBox="0 0 12 8"><circle cx="4.6" cy="3" r="2.1" fill="none" stroke="#222" stroke-width="0.8"/><path d="M3.2 4.6L1 7" stroke="#222" stroke-width="1"/><path d="M8.4 2.6h3l-1.5 2.2z" fill="#111"/></svg>
<svg style="left:219.5px;top:364.6px;" width="14" height="9" viewBox="0 0 14 9"><path d="M0.4 1.4h3.4M0.4 4.4h3.4M0.4 7.4h3.4M9 1.4h3.4M9 4.4h3.4M9 7.4h3.4" stroke="#d2d2d2" stroke-width="1"/><path d="M3.8 1.4L6.4 4.4 3.8 7.4M9 1.4L6.4 4.4 9 7.4M3.8 4.4H9" stroke="#d2d2d2" stroke-width="0.7" fill="none"/><rect x="12.6" y="8" width="1" height="1" fill="#bbb"/></svg>
<svg style="left:241px;top:364px;" width="11" height="10" viewBox="0 0 11 10"><path d="M5.8 2.6l3.6 1.6v3.8l-3.6 1.6-3.6-1.6V4.2z" fill="#d2d2d2"/><path d="M2.2 4.2l3.6 1.6 3.6-1.6M5.8 5.8v3.8" stroke="#444" stroke-width="0.6" fill="none"/><path d="M1.6 0.2v3M0.2 1.7h2.8M0.6 0.7l2 2M2.6 0.7l-2 2" stroke="#d2d2d2" stroke-width="0.5"/></svg>
<svg style="left:260.5px;top:364.6px;" width="10" height="9" viewBox="0 0 10 9"><path d="M1.4 5.4a3.6 3.6 0 0 1 7.2 0z" fill="#d2d2d2"/><rect x="0.2" y="5.8" width="9.6" height="2.4" fill="#d2d2d2"/><rect x="1.6" y="6.6" width="6.8" height="0.8" fill="#555"/></svg>
<svg style="left:275.6px;top:364.4px;" width="12" height="9.4" viewBox="0 0 12 9.4"><path d="M0.4 2.6l3.4-1.4v6.6L0.4 9zM4.2 1.2l3.4 1.4v6.4L4.2 7.8zM8 2.6l3.4-1.4v6.6L8 9z" fill="#9c9c9c"/></svg>
<svg style="left:291.8px;top:364.6px;" width="11" height="9" viewBox="0 0 11 9"><rect x="1" y="2.4" width="9" height="4.6" rx="2.3" fill="#9c9c9c" transform="rotate(-32 5.5 4.7)"/></svg>
<svg style="left:308.6px;top:364px;" width="12" height="10" viewBox="0 0 12 10"><circle cx="6.6" cy="4" r="3.6" fill="#d2d2d2"/><path d="M3.6 6l-3 3.4 4.6-1.6z" fill="#d2d2d2"/><circle cx="6.6" cy="4" r="1.6" fill="#444"/></svg>
<svg style="left:324.6px;top:365px;" width="12" height="8.6" viewBox="0 0 12 8.6"><rect x="0.5" y="0.5" width="8.6" height="6" fill="none" stroke="#d2d2d2" stroke-width="0.9"/><path d="M0.5 5.6l3-3.4 2.6 2 5.2 3.6" stroke="#d2d2d2" stroke-width="0.9" fill="none"/></svg>
<div style="left:1.6px;top:380px;width:342.6px;height:10.6px;background:linear-gradient(180deg,#414141,#323232);"></div>
<div style="left:1.6px;top:379.4px;width:342.6px;height:0.7px;background:#242424;"></div>
<div style="left:1.6px;top:390.6px;width:342.6px;height:0.9px;background:#1e1e1e;"></div>
<svg style="left:4px;top:382.4px;" width="6" height="6" viewBox="0 0 6 6"><path d="M0.2 3C1.4 0.8 4.2 0.8 5.6 3 4.2 5.2 1.4 5.2 0.2 3z" fill="#d2d2d2"/><circle cx="2.9" cy="3" r="1.1" fill="#333"/></svg>
<svg style="left:10.4px;top:382px;" width="7" height="7" viewBox="0 0 7 7"><path d="M0.2 2.4h1.4L3.6 0.6v5.6L1.6 4.4H0.2z" fill="#d2d2d2"/><path d="M4.6 1.8a2 2 0 0 1 0 3.2M5.4 0.8a3.2 3.2 0 0 1 0 5.2" stroke="#d2d2d2" stroke-width="0.6" fill="none"/></svg>
<svg style="left:22.2px;top:383.2px;" width="5" height="5" viewBox="0 0 5 5"><circle cx="2.2" cy="2.2" r="2" fill="#d2d2d2"/></svg>
<svg style="left:31px;top:381.6px;" width="6" height="8" viewBox="0 0 6 8"><path d="M1.4 3.4V2.2a1.5 1.5 0 0 1 3 0v1.2" stroke="#d2d2d2" stroke-width="0.9" fill="none"/><rect x="0.4" y="3.4" width="5" height="3.6" fill="#d2d2d2"/></svg>
<svg style="left:47px;top:380.8px;" width="10" height="9" viewBox="0 0 10 9"><path d="M1 5.2L5.2 1h3.3v3.3L4.3 8.5z" fill="#d8d8d8"/><circle cx="7" cy="2.5" r="0.8" fill="#333"/></svg>
<span class="t" style="left:61px;top:379.65px;line-height:12px;font-size:6.4px;color:#bdbdbd;">#</span>
<span class="t" style="left:80px;top:379.65px;line-height:12px;font-size:6.0px;color:#bdbdbd;letter-spacing:-0.371px;">Source Name</span>
<span class="t" style="left:188px;top:379.65px;line-height:12px;font-size:6.0px;color:#bdbdbd;letter-spacing:-0.252px;">Mode</span>
<span class="t" style="left:227px;top:379.65px;line-height:12px;font-size:6.4px;color:#bdbdbd;">T</span>
<span class="t" style="left:235px;top:379.65px;line-height:12px;font-size:6.5px;color:#bdbdbd;letter-spacing:-0.096px;">TrkMat</span>
<span class="t" style="left:270px;top:379.65px;line-height:12px;font-size:6.0px;color:#bdbdbd;letter-spacing:-0.179px;">Parent</span>
<div style="left:40px;top:381.5px;width:0.7px;height:8px;background:#2a2a2a;"></div>
<div style="left:58px;top:381.5px;width:0.7px;height:8px;background:#2a2a2a;"></div>
<div style="left:77px;top:381.5px;width:0.7px;height:8px;background:#2a2a2a;"></div>
<div style="left:183.5px;top:381.5px;width:0.7px;height:8px;background:#2a2a2a;"></div>
<div style="left:266.5px;top:381.5px;width:0.7px;height:8px;background:#2a2a2a;"></div>
<div style="left:335.5px;top:381.5px;width:0.7px;height:8px;background:#2a2a2a;"></div>
<div style="left:1.6px;top:391.5px;width:342.6px;height:214.5px;background:#393939;"></div>
<div style="left:1.6px;top:401.23px;width:342.6px;height:0.8px;background:#323232;"></div>
<div style="left:1.6px;top:410.98px;width:342.6px;height:0.8px;background:#323232;"></div>
<div style="left:1.6px;top:420.73px;width:342.6px;height:0.8px;background:#323232;"></div>
<div style="left:1.6px;top:430.48px;width:342.6px;height:0.8px;background:#323232;"></div>
<div style="left:1.6px;top:440.23px;width:342.6px;height:0.8px;background:#323232;"></div>
<div style="left:1.6px;top:449.98px;width:342.6px;height:0.8px;background:#323232;"></div>
<div style="left:1.6px;top:459.73px;width:342.6px;height:0.8px;background:#323232;"></div>
<div style="left:1.6px;top:469.48px;width:342.6px;height:0.8px;background:#323232;"></div>
<div style="left:1.6px;top:479.23px;width:342.6px;height:0.8px;background:#323232;"></div>
<div style="left:1.6px;top:488.98px;width:342.6px;height:0.8px;background:#323232;"></div>
<div style="left:1.6px;top:498.73px;width:342.6px;height:0.8px;background:#323232;"></div>
<div style="left:1.6px;top:508.48px;width:342.6px;height:0.8px;background:#323232;"></div>
<div style="left:1.6px;top:518.23px;width:342.6px;height:0.8px;background:#323232;"></div>
<div style="left:1.6px;top:527.98px;width:342.6px;height:0.8px;background:#323232;"></div>
<div style="left:1.6px;top:537.73px;width:342.6px;height:0.8px;background:#323232;"></div>
<div style="left:1.6px;top:547.48px;width:342.6px;height:0.8px;background:#323232;"></div>
<div style="left:1.6px;top:557.23px;width:342.6px;height:0.8px;background:#323232;"></div>
<div style="left:1.6px;top:566.98px;width:342.6px;height:0.8px;background:#323232;"></div>
<div style="left:1.6px;top:576.73px;width:342.6px;height:0.8px;background:#323232;"></div>
<div style="left:1.6px;top:586.48px;width:342.6px;height:0.8px;background:#323232;"></div>
<div style="left:1.6px;top:596.23px;width:342.6px;height:0.8px;background:#323232;"></div>
<span class="t" style="left:91.5px;top:391.2px;line-height:12px;font-size:6.55px;color:#cccccc;">Type</span>
<div style="left:188.5px;top:392.35px;width:75px;height:8.8px;background:linear-gradient(180deg,#454545,#393939);border:0.6px solid #242424;box-sizing:border-box;border-radius:1.5px;"></div>
<span class="t" style="left:192.5px;top:391.2px;line-height:12px;font-size:6.5px;color:#c8c8c8;">Polygon</span>
<svg style="left:256.6px;top:395.15px;" width="5" height="4" viewBox="0 0 5 4"><path d="M0.3 0.3h4.2L2.4 3.2z" fill="#c8c8c8"/></svg>
<svg style="left:91px;top:402.7px;" width="6" height="7.6" viewBox="0 0 6 7.6"><circle cx="2.8" cy="4.4" r="2.4" fill="none" stroke="#c8c8c8" stroke-width="0.8"/><path d="M2.8 4.4V2.8M1.8 0.6h2M2.8 0.6v1.2M4.6 1.8l0.8-0.8" stroke="#c8c8c8" stroke-width="0.7" fill="none"/></svg>
<span class="t" style="left:100.5px;top:400.95px;line-height:12px;font-size:6.5px;color:#cccccc;letter-spacing:-0.011px;">Points</span>
<span class="t" style="left:188.5px;top:401.05px;line-height:12px;font-size:7.05px;color:#dfa21f;text-decoration:underline;text-decoration-color:rgba(215,155,30,.6);text-underline-offset:0.8px;text-decoration-thickness:0.6px;text-underline-offset:0.8px;">3.0</span>
<svg style="left:5px;top:413.65px;" width="3.6" height="5.2" viewBox="0 0 3.6 5.2"><path d="M3.4 0v5.2L0.2 2.6z" fill="#6a6a6a"/></svg>
<svg style="left:13px;top:413.45px;" width="5.6" height="5.6" viewBox="0 0 5.6 5.6"><path d="M2.8 0.2L5.4 2.8 2.8 5.4 0.2 2.8z" fill="#ecd66a" stroke="#8a7420" stroke-width="0.4"/></svg>
<svg style="left:22px;top:413.65px;" width="3.6" height="5.2" viewBox="0 0 3.6 5.2"><path d="M0.2 0v5.2L3.4 2.6z" fill="#6a6a6a"/></svg>
<div style="left:89.4px;top:412.05px;width:8.6px;height:8.4px;background:#1a1a1a;border-radius:1px;"></div>
<svg style="left:91px;top:412.45px;" width="6" height="7.6" viewBox="0 0 6 7.6"><circle cx="2.8" cy="4.4" r="2.4" fill="none" stroke="#e8e8e8" stroke-width="0.8"/><path d="M2.8 4.4V2.8M1.8 0.6h2M2.8 0.6v1.2M4.6 1.8l0.8-0.8" stroke="#e8e8e8" stroke-width="0.7" fill="none"/></svg>
<svg style="left:100.5px;top:412.85px;" width="7" height="7" viewBox="0 0 7 7"><path d="M0.6 0.4v6h5.8" stroke="#b0b0b0" stroke-width="0.8" fill="none"/><path d="M0.6 0.8L3.6 6" stroke="#b0b0b0" stroke-width="0.6"/></svg>
<span class="t" style="left:111.3px;top:410.7px;line-height:12px;font-size:6.75px;color:#cccccc;">Position</span>
<span class="t" style="left:188.5px;top:410.8px;line-height:12px;font-size:7.36px;color:#dfa21f;text-decoration:underline;text-decoration-color:rgba(215,155,30,.6);text-underline-offset:0.8px;text-decoration-thickness:0.6px;text-underline-offset:0.8px;">0.0,0.0</span>
<svg style="left:91px;top:422.2px;" width="6" height="7.6" viewBox="0 0 6 7.6"><circle cx="2.8" cy="4.4" r="2.4" fill="none" stroke="#c8c8c8" stroke-width="0.8"/><path d="M2.8 4.4V2.8M1.8 0.6h2M2.8 0.6v1.2M4.6 1.8l0.8-0.8" stroke="#c8c8c8" stroke-width="0.7" fill="none"/></svg>
<span class="t" style="left:100.5px;top:420.45px;line-height:12px;font-size:6.77px;color:#cccccc;">Rotation</span>
<span class="t" style="left:188.5px;top:420.55px;line-height:12px;font-size:7.58px;color:#dfa21f;text-decoration:underline;text-decoration-color:rgba(215,155,30,.6);text-underline-offset:0.8px;text-decoration-thickness:0.6px;text-underline-offset:0.8px;">0x+0.0°</span>
<svg style="left:91px;top:431.95px;" width="6" height="7.6" viewBox="0 0 6 7.6"><circle cx="2.8" cy="4.4" r="2.4" fill="none" stroke="#c8c8c8" stroke-width="0.8"/><path d="M2.8 4.4V2.8M1.8 0.6h2M2.8 0.6v1.2M4.6 1.8l0.8-0.8" stroke="#c8c8c8" stroke-width="0.7" fill="none"/></svg>
<span class="t" style="left:100.5px;top:430.2px;line-height:12px;font-size:6.65px;color:#cccccc;">Outer Radius</span>
<span class="t" style="left:188.5px;top:430.3px;line-height:12px;font-size:7.19px;color:#dfa21f;text-decoration:underline;text-decoration-color:rgba(215,155,30,.6);text-underline-offset:0.8px;text-decoration-thickness:0.6px;text-underline-offset:0.8px;">100.0</span>
<svg style="left:91px;top:441.7px;" width="6" height="7.6" viewBox="0 0 6 7.6"><circle cx="2.8" cy="4.4" r="2.4" fill="none" stroke="#c8c8c8" stroke-width="0.8"/><path d="M2.8 4.4V2.8M1.8 0.6h2M2.8 0.6v1.2M4.6 1.8l0.8-0.8" stroke="#c8c8c8" stroke-width="0.7" fill="none"/></svg>
<span class="t" style="left:100.5px;top:439.95px;line-height:12px;font-size:6.66px;color:#cccccc;">Outer Roundness</span>
<span class="t" style="left:188.5px;top:440.05px;line-height:12px;font-size:6.5px;color:#dfa21f;text-decoration:underline;text-decoration-color:rgba(215,155,30,.6);text-underline-offset:0.8px;text-decoration-thickness:0.6px;text-underline-offset:0.8px;letter-spacing:-0.079px;">0.0%</span>
<svg style="left:72px;top:452.65px;" width="4" height="5.2" viewBox="0 0 4 5.2"><path d="M0.3 0L3.6 2.6L0.3 5.2z" fill="#a0a0a0"/></svg>
<span class="t" style="left:81px;top:449.7px;line-height:12px;font-size:6.85px;color:#cccccc;">Stroke 1</span>
<div style="left:188.5px;top:450.85px;width:75px;height:8.8px;background:linear-gradient(180deg,#454545,#393939);border:0.6px solid #242424;box-sizing:border-box;border-radius:1.5px;"></div>
<span class="t" style="left:192.5px;top:449.7px;line-height:12px;font-size:6.83px;color:#c8c8c8;">Normal</span>
<svg style="left:256.6px;top:453.65px;" width="5" height="4" viewBox="0 0 5 4"><path d="M0.3 0.3h4.2L2.4 3.2z" fill="#c8c8c8"/></svg>
<div style="left:3.5px;top:451.25px;width:8px;height:8px;background:#444;border:0.6px solid #2c2c2c;box-sizing:border-box;"></div>
<svg style="left:72px;top:462.4px;" width="4" height="5.2" viewBox="0 0 4 5.2"><path d="M0.3 0L3.6 2.6L0.3 5.2z" fill="#a0a0a0"/></svg>
<span class="t" style="left:81px;top:459.45px;line-height:12px;font-size:6.87px;color:#cccccc;">Fill 1</span>
<div style="left:188.5px;top:460.6px;width:75px;height:8.8px;background:linear-gradient(180deg,#454545,#393939);border:0.6px solid #242424;box-sizing:border-box;border-radius:1.5px;"></div>
<span class="t" style="left:192.5px;top:459.45px;line-height:12px;font-size:6.83px;color:#c8c8c8;">Normal</span>
<svg style="left:256.6px;top:463.4px;" width="5" height="4" viewBox="0 0 5 4"><path d="M0.3 0.3h4.2L2.4 3.2z" fill="#c8c8c8"/></svg>
<svg style="left:4px;top:462.0px;" width="7" height="6" viewBox="0 0 7 6"><path d="M0.2 3C1.6 0.6 5 0.6 6.4 3 5 5.4 1.6 5.4 0.2 3z" fill="#d8d8d8"/><circle cx="3.3" cy="3" r="1.2" fill="#333"/></svg>
<div style="left:3.5px;top:468.6px;width:8px;height:0.6px;background:#666;"></div>
<svg style="left:72px;top:472.95px;" width="5.4" height="4" viewBox="0 0 5.4 4"><path d="M0 0.2h5L2.5 3.8z" fill="#b4b4b4"/></svg>
<span class="t" style="left:81.5px;top:469.2px;line-height:12px;font-size:6.88px;color:#cccccc;">Transform: Polystar 1</span>
<svg style="left:91px;top:480.7px;" width="6" height="7.6" viewBox="0 0 6 7.6"><circle cx="2.8" cy="4.4" r="2.4" fill="none" stroke="#c8c8c8" stroke-width="0.8"/><path d="M2.8 4.4V2.8M1.8 0.6h2M2.8 0.6v1.2M4.6 1.8l0.8-0.8" stroke="#c8c8c8" stroke-width="0.7" fill="none"/></svg>
<span class="t" style="left:100.5px;top:478.95px;line-height:12px;font-size:6.81px;color:#cccccc;">Anchor Point</span>
<span class="t" style="left:188.5px;top:479.05px;line-height:12px;font-size:7.36px;color:#dfa21f;text-decoration:underline;text-decoration-color:rgba(215,155,30,.6);text-underline-offset:0.8px;text-decoration-thickness:0.6px;text-underline-offset:0.8px;">0.0,0.0</span>
<svg style="left:91px;top:490.45px;" width="6" height="7.6" viewBox="0 0 6 7.6"><circle cx="2.8" cy="4.4" r="2.4" fill="none" stroke="#c8c8c8" stroke-width="0.8"/><path d="M2.8 4.4V2.8M1.8 0.6h2M2.8 0.6v1.2M4.6 1.8l0.8-0.8" stroke="#c8c8c8" stroke-width="0.7" fill="none"/></svg>
<span class="t" style="left:100.5px;top:488.7px;line-height:12px;font-size:6.89px;color:#cccccc;">Position</span>
<span class="t" style="left:188.5px;top:488.8px;line-height:12px;font-size:7.36px;color:#dfa21f;text-decoration:underline;text-decoration-color:rgba(215,155,30,.6);text-underline-offset:0.8px;text-decoration-thickness:0.6px;text-underline-offset:0.8px;">0.0,0.0</span>
<svg style="left:5px;top:501.4px;" width="3.6" height="5.2" viewBox="0 0 3.6 5.2"><path d="M3.4 0v5.2L0.2 2.6z" fill="#6a6a6a"/></svg>
<svg style="left:13px;top:501.2px;" width="5.6" height="5.6" viewBox="0 0 5.6 5.6"><path d="M2.8 0.2L5.4 2.8 2.8 5.4 0.2 2.8z" fill="#ecd66a" stroke="#8a7420" stroke-width="0.4"/></svg>
<svg style="left:22px;top:501.4px;" width="3.6" height="5.2" viewBox="0 0 3.6 5.2"><path d="M0.2 0v5.2L3.4 2.6z" fill="#6a6a6a"/></svg>
<div style="left:89.4px;top:499.8px;width:8.6px;height:8.4px;background:#1a1a1a;border-radius:1px;"></div>
<svg style="left:91px;top:500.2px;" width="6" height="7.6" viewBox="0 0 6 7.6"><circle cx="2.8" cy="4.4" r="2.4" fill="none" stroke="#e8e8e8" stroke-width="0.8"/><path d="M2.8 4.4V2.8M1.8 0.6h2M2.8 0.6v1.2M4.6 1.8l0.8-0.8" stroke="#e8e8e8" stroke-width="0.7" fill="none"/></svg>
<svg style="left:100.5px;top:500.6px;" width="7" height="7" viewBox="0 0 7 7"><path d="M0.6 0.4v6h5.8" stroke="#b0b0b0" stroke-width="0.8" fill="none"/><path d="M0.6 0.8L3.6 6" stroke="#b0b0b0" stroke-width="0.6"/></svg>
<span class="t" style="left:111.3px;top:498.45px;line-height:12px;font-size:6.5px;color:#cccccc;letter-spacing:-0.152px;">Scale</span>
<div style="left:188px;top:500.4px;width:6.6px;height:6.6px;background:#454545;border:0.6px solid #2a2a2a;box-sizing:border-box;"></div>
<span class="t" style="left:198.5px;top:498.55px;line-height:12px;font-size:6.88px;color:#dfa21f;text-decoration:underline;text-decoration-color:rgba(215,155,30,.6);text-underline-offset:0.8px;text-decoration-thickness:0.6px;text-underline-offset:0.8px;">50.0,0.0%</span>
<svg style="left:91px;top:509.95px;" width="6" height="7.6" viewBox="0 0 6 7.6"><circle cx="2.8" cy="4.4" r="2.4" fill="none" stroke="#c8c8c8" stroke-width="0.8"/><path d="M2.8 4.4V2.8M1.8 0.6h2M2.8 0.6v1.2M4.6 1.8l0.8-0.8" stroke="#c8c8c8" stroke-width="0.7" fill="none"/></svg>
<span class="t" style="left:100.5px;top:508.2px;line-height:12px;font-size:6.5px;color:#cccccc;letter-spacing:-0.224px;">Skew</span>
<span class="t" style="left:188.5px;top:508.3px;line-height:12px;font-size:6.83px;color:#dfa21f;text-decoration:underline;text-decoration-color:rgba(215,155,30,.6);text-underline-offset:0.8px;text-decoration-thickness:0.6px;text-underline-offset:0.8px;">0.0</span>
<svg style="left:91px;top:519.7px;" width="6" height="7.6" viewBox="0 0 6 7.6"><circle cx="2.8" cy="4.4" r="2.4" fill="none" stroke="#c8c8c8" stroke-width="0.8"/><path d="M2.8 4.4V2.8M1.8 0.6h2M2.8 0.6v1.2M4.6 1.8l0.8-0.8" stroke="#c8c8c8" stroke-width="0.7" fill="none"/></svg>
<span class="t" style="left:100.5px;top:517.95px;line-height:12px;font-size:6.58px;color:#cccccc;">Skew Axis</span>
<span class="t" style="left:188.5px;top:518.05px;line-height:12px;font-size:7.58px;color:#dfa21f;text-decoration:underline;text-decoration-color:rgba(215,155,30,.6);text-underline-offset:0.8px;text-decoration-thickness:0.6px;text-underline-offset:0.8px;">0x+0.0°</span>
<svg style="left:91px;top:529.45px;" width="6" height="7.6" viewBox="0 0 6 7.6"><circle cx="2.8" cy="4.4" r="2.4" fill="none" stroke="#c8c8c8" stroke-width="0.8"/><path d="M2.8 4.4V2.8M1.8 0.6h2M2.8 0.6v1.2M4.6 1.8l0.8-0.8" stroke="#c8c8c8" stroke-width="0.7" fill="none"/></svg>
<span class="t" style="left:100.5px;top:527.7px;line-height:12px;font-size:6.77px;color:#cccccc;">Rotation</span>
<span class="t" style="left:188.5px;top:527.8px;line-height:12px;font-size:7.58px;color:#dfa21f;text-decoration:underline;text-decoration-color:rgba(215,155,30,.6);text-underline-offset:0.8px;text-decoration-thickness:0.6px;text-underline-offset:0.8px;">0x+0.0°</span>
<svg style="left:91px;top:539.2px;" width="6" height="7.6" viewBox="0 0 6 7.6"><circle cx="2.8" cy="4.4" r="2.4" fill="none" stroke="#c8c8c8" stroke-width="0.8"/><path d="M2.8 4.4V2.8M1.8 0.6h2M2.8 0.6v1.2M4.6 1.8l0.8-0.8" stroke="#c8c8c8" stroke-width="0.7" fill="none"/></svg>
<span class="t" style="left:100.5px;top:537.45px;line-height:12px;font-size:6.78px;color:#cccccc;">Opacity</span>
<span class="t" style="left:188.5px;top:537.55px;line-height:12px;font-size:6.5px;color:#dfa21f;text-decoration:underline;text-decoration-color:rgba(215,155,30,.6);text-underline-offset:0.8px;text-decoration-thickness:0.6px;text-underline-offset:0.8px;letter-spacing:-0.156px;">100%</span>
<svg style="left:52.3px;top:550.95px;" width="5.4" height="4" viewBox="0 0 5.4 4"><path d="M0 0.2h5L2.5 3.8z" fill="#b4b4b4"/></svg>
<span class="t" style="left:62px;top:547.2px;line-height:12px;font-size:7.08px;color:#cccccc;">Transform</span>
<span class="t" style="left:188px;top:547.3px;line-height:12px;font-size:6.5px;color:#dfa21f;text-decoration:underline;text-decoration-color:rgba(215,155,30,.6);text-underline-offset:0.8px;text-decoration-thickness:0.6px;text-underline-offset:0.8px;letter-spacing:-0.096px;">Reset</span>
<svg style="left:71.3px;top:558.7px;" width="6" height="7.6" viewBox="0 0 6 7.6"><circle cx="2.8" cy="4.4" r="2.4" fill="none" stroke="#c8c8c8" stroke-width="0.8"/><path d="M2.8 4.4V2.8M1.8 0.6h2M2.8 0.6v1.2M4.6 1.8l0.8-0.8" stroke="#c8c8c8" stroke-width="0.7" fill="none"/></svg>
<span class="t" style="left:80.8px;top:556.95px;line-height:12px;font-size:6.81px;color:#cccccc;">Anchor Point</span>
<span class="t" style="left:188.5px;top:557.05px;line-height:12px;font-size:7.36px;color:#dfa21f;text-decoration:underline;text-decoration-color:rgba(215,155,30,.6);text-underline-offset:0.8px;text-decoration-thickness:0.6px;text-underline-offset:0.8px;">0.0,0.0</span>
<svg style="left:71.3px;top:568.45px;" width="6" height="7.6" viewBox="0 0 6 7.6"><circle cx="2.8" cy="4.4" r="2.4" fill="none" stroke="#c8c8c8" stroke-width="0.8"/><path d="M2.8 4.4V2.8M1.8 0.6h2M2.8 0.6v1.2M4.6 1.8l0.8-0.8" stroke="#c8c8c8" stroke-width="0.7" fill="none"/></svg>
<span class="t" style="left:80.8px;top:566.7px;line-height:12px;font-size:6.75px;color:#cccccc;">Position</span>
<span class="t" style="left:188.5px;top:566.8px;line-height:12px;font-size:7.29px;color:#dfa21f;text-decoration:underline;text-decoration-color:rgba(215,155,30,.6);text-underline-offset:0.8px;text-decoration-thickness:0.6px;text-underline-offset:0.8px;">960.0,540.0</span>
<svg style="left:5px;top:579.4px;" width="3.6" height="5.2" viewBox="0 0 3.6 5.2"><path d="M3.4 0v5.2L0.2 2.6z" fill="#6a6a6a"/></svg>
<svg style="left:13px;top:579.2px;" width="5.6" height="5.6" viewBox="0 0 5.6 5.6"><path d="M2.8 0.2L5.4 2.8 2.8 5.4 0.2 2.8z" fill="#ecd66a" stroke="#8a7420" stroke-width="0.4"/></svg>
<svg style="left:22px;top:579.4px;" width="3.6" height="5.2" viewBox="0 0 3.6 5.2"><path d="M0.2 0v5.2L3.4 2.6z" fill="#6a6a6a"/></svg>
<div style="left:90px;top:577.3px;width:95px;height:9.4px;background:#565656;"></div>
<div style="left:69.7px;top:577.8px;width:8.6px;height:8.4px;background:#1a1a1a;border-radius:1px;"></div>
<svg style="left:71.3px;top:578.2px;" width="6" height="7.6" viewBox="0 0 6 7.6"><circle cx="2.8" cy="4.4" r="2.4" fill="none" stroke="#e8e8e8" stroke-width="0.8"/><path d="M2.8 4.4V2.8M1.8 0.6h2M2.8 0.6v1.2M4.6 1.8l0.8-0.8" stroke="#e8e8e8" stroke-width="0.7" fill="none"/></svg>
<svg style="left:80.8px;top:578.6px;" width="7" height="7" viewBox="0 0 7 7"><path d="M0.6 0.4v6h5.8" stroke="#b0b0b0" stroke-width="0.8" fill="none"/><path d="M0.6 0.8L3.6 6" stroke="#b0b0b0" stroke-width="0.6"/></svg>
<span class="t" style="left:91.6px;top:576.45px;line-height:12px;font-size:6.5px;color:#eee;letter-spacing:-0.052px;">Scale</span>
<svg style="left:187.4px;top:580.0px;" width="8" height="4.4" viewBox="0 0 8 4.4"><ellipse cx="2.2" cy="2" rx="1.7" ry="1.4" fill="none" stroke="#c8c8c8" stroke-width="0.7"/><ellipse cx="5.4" cy="2" rx="1.7" ry="1.4" fill="none" stroke="#c8c8c8" stroke-width="0.7"/></svg>
<div style="left:187.6px;top:585.0px;width:7px;height:0.6px;background:#888;"></div>
<span class="t" style="left:198px;top:576.55px;line-height:12px;font-size:6.97px;color:#dfa21f;text-decoration:underline;text-decoration-color:rgba(215,155,30,.6);text-underline-offset:0.8px;text-decoration-thickness:0.6px;text-underline-offset:0.8px;">0.0,0.0%</span>
<svg style="left:71.3px;top:587.95px;" width="6" height="7.6" viewBox="0 0 6 7.6"><circle cx="2.8" cy="4.4" r="2.4" fill="none" stroke="#c8c8c8" stroke-width="0.8"/><path d="M2.8 4.4V2.8M1.8 0.6h2M2.8 0.6v1.2M4.6 1.8l0.8-0.8" stroke="#c8c8c8" stroke-width="0.7" fill="none"/></svg>
<span class="t" style="left:80.8px;top:586.2px;line-height:12px;font-size:6.71px;color:#cccccc;">Rotation</span>
<span class="t" style="left:188.5px;top:586.3px;line-height:12px;font-size:7.58px;color:#dfa21f;text-decoration:underline;text-decoration-color:rgba(215,155,30,.6);text-underline-offset:0.8px;text-decoration-thickness:0.6px;text-underline-offset:0.8px;">0x+0.0°</span>
<svg style="left:71.3px;top:597.7px;" width="6" height="7.6" viewBox="0 0 6 7.6"><circle cx="2.8" cy="4.4" r="2.4" fill="none" stroke="#c8c8c8" stroke-width="0.8"/><path d="M2.8 4.4V2.8M1.8 0.6h2M2.8 0.6v1.2M4.6 1.8l0.8-0.8" stroke="#c8c8c8" stroke-width="0.7" fill="none"/></svg>
<span class="t" style="left:80.8px;top:595.95px;line-height:12px;font-size:6.78px;color:#cccccc;">Opacity</span>
<span class="t" style="left:188.5px;top:596.05px;line-height:12px;font-size:6.5px;color:#dfa21f;text-decoration:underline;text-decoration-color:rgba(215,155,30,.6);text-underline-offset:0.8px;text-decoration-thickness:0.6px;text-underline-offset:0.8px;letter-spacing:-0.156px;">100%</span>
<div style="left:344.2px;top:360px;width:1px;height:246px;background:#1f1f1f;"></div>
<div style="left:345.2px;top:360px;width:515px;height:20px;background:#383838;"></div>
<div style="left:347px;top:363.2px;width:501px;height:4.4px;background:#7b7b7b;border-radius:1px;"></div>
<div style="left:345.6px;top:362.8px;width:3px;height:5px;background:#d8981e;border-radius:1px 0 0 1px;"></div>
<div style="left:846.2px;top:362.8px;width:3px;height:5px;background:#d8981e;border-radius:0 1px 1px 0;"></div>
<span class="t" style="left:350.6px;top:366.55px;line-height:12px;font-size:6.6px;color:#b8b8b8;">00s</span>
<div style="left:381.7px;top:376.6px;width:0.8px;height:2.2px;background:#a8a8a8;"></div>
<span class="t" style="left:376.7px;top:366.55px;line-height:12px;font-size:6.6px;color:#b8b8b8;">02s</span>
<div style="left:414.9px;top:376.6px;width:0.8px;height:2.2px;background:#a8a8a8;"></div>
<span class="t" style="left:409.9px;top:366.55px;line-height:12px;font-size:6.6px;color:#b8b8b8;">04s</span>
<div style="left:448.1px;top:376.6px;width:0.8px;height:2.2px;background:#a8a8a8;"></div>
<span class="t" style="left:443.1px;top:366.55px;line-height:12px;font-size:6.6px;color:#b8b8b8;">06s</span>
<div style="left:481.3px;top:376.6px;width:0.8px;height:2.2px;background:#a8a8a8;"></div>
<span class="t" style="left:476.3px;top:366.55px;line-height:12px;font-size:6.6px;color:#b8b8b8;">08s</span>
<div style="left:514.5px;top:376.6px;width:0.8px;height:2.2px;background:#a8a8a8;"></div>
<span class="t" style="left:509.5px;top:366.55px;line-height:12px;font-size:6.6px;color:#b8b8b8;">10s</span>
<div style="left:547.7px;top:376.6px;width:0.8px;height:2.2px;background:#a8a8a8;"></div>
<span class="t" style="left:542.7px;top:366.55px;line-height:12px;font-size:6.6px;color:#b8b8b8;">12s</span>
<div style="left:580.9px;top:376.6px;width:0.8px;height:2.2px;background:#a8a8a8;"></div>
<span class="t" style="left:575.9px;top:366.55px;line-height:12px;font-size:6.6px;color:#b8b8b8;">14s</span>
<div style="left:614.1px;top:376.6px;width:0.8px;height:2.2px;background:#a8a8a8;"></div>
<span class="t" style="left:609.1px;top:366.55px;line-height:12px;font-size:6.6px;color:#b8b8b8;">16s</span>
<div style="left:647.3px;top:376.6px;width:0.8px;height:2.2px;background:#a8a8a8;"></div>
<span class="t" style="left:642.3px;top:366.55px;line-height:12px;font-size:6.6px;color:#b8b8b8;">18s</span>
<div style="left:680.5px;top:376.6px;width:0.8px;height:2.2px;background:#a8a8a8;"></div>
<span class="t" style="left:675.5px;top:366.55px;line-height:12px;font-size:6.6px;color:#b8b8b8;">20s</span>
<div style="left:713.7px;top:376.6px;width:0.8px;height:2.2px;background:#a8a8a8;"></div>
<span class="t" style="left:708.7px;top:366.55px;line-height:12px;font-size:6.6px;color:#b8b8b8;">22s</span>
<div style="left:746.9px;top:376.6px;width:0.8px;height:2.2px;background:#a8a8a8;"></div>
<span class="t" style="left:741.9px;top:366.55px;line-height:12px;font-size:6.6px;color:#b8b8b8;">24s</span>
<div style="left:780.1px;top:376.6px;width:0.8px;height:2.2px;background:#a8a8a8;"></div>
<span class="t" style="left:775.1px;top:366.55px;line-height:12px;font-size:6.6px;color:#b8b8b8;">26s</span>
<div style="left:813.3px;top:376.6px;width:0.8px;height:2.2px;background:#a8a8a8;"></div>
<span class="t" style="left:808.3px;top:366.55px;line-height:12px;font-size:6.6px;color:#b8b8b8;">28s</span>
<div style="left:846.5px;top:376.6px;width:0.8px;height:2.2px;background:#a8a8a8;"></div>
<div style="left:836px;top:368px;width:14px;height:9px;overflow:hidden;"><span class="t" style="left:6px;top:-1.7px;line-height:12px;font-size:6.6px;color:#b8b8b8;">30s</span></div>
<div style="left:345.2px;top:379.4px;width:515px;height:0.7px;background:#262626;"></div>
<div style="left:345.2px;top:380px;width:504.8px;height:8.6px;background:#2e2e2e;"></div>
<div style="left:347.6px;top:380.2px;width:499.6px;height:8.2px;background:linear-gradient(180deg,#787878,#6a6a6a);"></div>
<div style="left:345.6px;top:380px;width:2.8px;height:8.6px;background:linear-gradient(90deg,#f0b030,#b87a14);border-radius:1px;"></div>
<div style="left:846.6px;top:380px;width:2.8px;height:8.6px;background:linear-gradient(90deg,#f0b030,#b87a14);border-radius:1px;"></div>
<div style="left:345.2px;top:388.6px;width:504.8px;height:3px;background:#2b2b2b;"></div>
<div style="left:349px;top:389px;width:498.4px;height:1.5px;background:#22be2c;"></div>
<div style="left:345.2px;top:391.5px;width:504.8px;height:214.5px;background:#454545;"></div>
<div style="left:345.2px;top:401.23px;width:504.8px;height:0.9px;background:#3a3a3a;"></div>
<div style="left:345.2px;top:410.98px;width:504.8px;height:0.9px;background:#3a3a3a;"></div>
<div style="left:345.2px;top:420.73px;width:504.8px;height:0.9px;background:#3a3a3a;"></div>
<div style="left:345.2px;top:430.48px;width:504.8px;height:0.9px;background:#3a3a3a;"></div>
<div style="left:345.2px;top:440.23px;width:504.8px;height:0.9px;background:#3a3a3a;"></div>
<div style="left:345.2px;top:449.98px;width:504.8px;height:0.9px;background:#3a3a3a;"></div>
<div style="left:345.2px;top:459.73px;width:504.8px;height:0.9px;background:#3a3a3a;"></div>
<div style="left:345.2px;top:469.48px;width:504.8px;height:0.9px;background:#3a3a3a;"></div>
<div style="left:345.2px;top:479.23px;width:504.8px;height:0.9px;background:#3a3a3a;"></div>
<div style="left:345.2px;top:488.98px;width:504.8px;height:0.9px;background:#3a3a3a;"></div>
<div style="left:345.2px;top:498.73px;width:504.8px;height:0.9px;background:#3a3a3a;"></div>
<div style="left:345.2px;top:508.48px;width:504.8px;height:0.9px;background:#3a3a3a;"></div>
<div style="left:345.2px;top:518.23px;width:504.8px;height:0.9px;background:#3a3a3a;"></div>
<div style="left:345.2px;top:527.98px;width:504.8px;height:0.9px;background:#3a3a3a;"></div>
<div style="left:345.2px;top:537.73px;width:504.8px;height:0.9px;background:#3a3a3a;"></div>
<div style="left:345.2px;top:547.48px;width:504.8px;height:0.9px;background:#3a3a3a;"></div>
<div style="left:345.2px;top:557.23px;width:504.8px;height:0.9px;background:#3a3a3a;"></div>
<div style="left:345.2px;top:566.98px;width:504.8px;height:0.9px;background:#3a3a3a;"></div>
<div style="left:345.2px;top:576.73px;width:504.8px;height:0.9px;background:#3a3a3a;"></div>
<div style="left:345.2px;top:586.48px;width:504.8px;height:0.9px;background:#3a3a3a;"></div>
<div style="left:345.2px;top:596.23px;width:504.8px;height:0.9px;background:#3a3a3a;"></div>
<div style="left:348.3px;top:376px;width:1.4px;height:230px;background:#8e2b22;"></div>
<svg style="left:345px;top:370.4px;" width="8" height="8" viewBox="0 0 8 8"><path d="M0.4 0.6h7.2v3L4 7.6 0.4 3.6z" fill="#f2c022" stroke="#8a6a10" stroke-width="0.5"/><path d="M2.4 2.6h3.2L4 5z" fill="#a87a10"/></svg>
<svg style="left:346.5px;top:402.9px;" width="5" height="7.2" viewBox="0 0 5 7.2"><path d="M2.5 0.6v6" stroke="#ea948a" stroke-width="1.8" fill="none"/><path d="M0.5 0.6h4M0.5 6.6h4" stroke="#f2d2cc" stroke-width="1.1" fill="none"/></svg>
<svg style="left:346.7px;top:414.05px;" width="4.6" height="4.6" viewBox="0 0 4.6 4.6"><path d="M2.3 0.3L4.3 2.3 2.3 4.3 0.3 2.3z" fill="#7a6a64" stroke="#c8a8a0" stroke-width="0.5"/></svg>
<svg style="left:346.5px;top:422.4px;" width="5" height="7.2" viewBox="0 0 5 7.2"><path d="M2.5 0.6v6" stroke="#ea948a" stroke-width="1.8" fill="none"/><path d="M0.5 0.6h4M0.5 6.6h4" stroke="#f2d2cc" stroke-width="1.1" fill="none"/></svg>
<svg style="left:346.5px;top:432.15px;" width="5" height="7.2" viewBox="0 0 5 7.2"><path d="M2.5 0.6v6" stroke="#ea948a" stroke-width="1.8" fill="none"/><path d="M0.5 0.6h4M0.5 6.6h4" stroke="#f2d2cc" stroke-width="1.1" fill="none"/></svg>
<svg style="left:346.5px;top:441.9px;" width="5" height="7.2" viewBox="0 0 5 7.2"><path d="M2.5 0.6v6" stroke="#ea948a" stroke-width="1.8" fill="none"/><path d="M0.5 0.6h4M0.5 6.6h4" stroke="#f2d2cc" stroke-width="1.1" fill="none"/></svg>
<svg style="left:346.5px;top:451.65px;" width="5" height="7.2" viewBox="0 0 5 7.2"><path d="M2.5 0.6v6" stroke="#ea948a" stroke-width="1.8" fill="none"/><path d="M0.5 0.6h4M0.5 6.6h4" stroke="#f2d2cc" stroke-width="1.1" fill="none"/></svg>
<svg style="left:346.5px;top:461.4px;" width="5" height="7.2" viewBox="0 0 5 7.2"><path d="M2.5 0.6v6" stroke="#ea948a" stroke-width="1.8" fill="none"/><path d="M0.5 0.6h4M0.5 6.6h4" stroke="#f2d2cc" stroke-width="1.1" fill="none"/></svg>
<svg style="left:346.5px;top:471.15px;" width="5" height="7.2" viewBox="0 0 5 7.2"><path d="M2.5 0.6v6" stroke="#ea948a" stroke-width="1.8" fill="none"/><path d="M0.5 0.6h4M0.5 6.6h4" stroke="#f2d2cc" stroke-width="1.1" fill="none"/></svg>
<svg style="left:346.5px;top:480.9px;" width="5" height="7.2" viewBox="0 0 5 7.2"><path d="M2.5 0.6v6" stroke="#ea948a" stroke-width="1.8" fill="none"/><path d="M0.5 0.6h4M0.5 6.6h4" stroke="#f2d2cc" stroke-width="1.1" fill="none"/></svg>
<svg style="left:346.5px;top:490.65px;" width="5" height="7.2" viewBox="0 0 5 7.2"><path d="M2.5 0.6v6" stroke="#ea948a" stroke-width="1.8" fill="none"/><path d="M0.5 0.6h4M0.5 6.6h4" stroke="#f2d2cc" stroke-width="1.1" fill="none"/></svg>
<svg style="left:346.7px;top:501.8px;" width="4.6" height="4.6" viewBox="0 0 4.6 4.6"><path d="M2.3 0.3L4.3 2.3 2.3 4.3 0.3 2.3z" fill="#7a6a64" stroke="#c8a8a0" stroke-width="0.5"/></svg>
<svg style="left:346.5px;top:510.15px;" width="5" height="7.2" viewBox="0 0 5 7.2"><path d="M2.5 0.6v6" stroke="#ea948a" stroke-width="1.8" fill="none"/><path d="M0.5 0.6h4M0.5 6.6h4" stroke="#f2d2cc" stroke-width="1.1" fill="none"/></svg>
<svg style="left:346.5px;top:519.9px;" width="5" height="7.2" viewBox="0 0 5 7.2"><path d="M2.5 0.6v6" stroke="#ea948a" stroke-width="1.8" fill="none"/><path d="M0.5 0.6h4M0.5 6.6h4" stroke="#f2d2cc" stroke-width="1.1" fill="none"/></svg>
<svg style="left:346.5px;top:529.65px;" width="5" height="7.2" viewBox="0 0 5 7.2"><path d="M2.5 0.6v6" stroke="#ea948a" stroke-width="1.8" fill="none"/><path d="M0.5 0.6h4M0.5 6.6h4" stroke="#f2d2cc" stroke-width="1.1" fill="none"/></svg>
<svg style="left:346.5px;top:539.4px;" width="5" height="7.2" viewBox="0 0 5 7.2"><path d="M2.5 0.6v6" stroke="#ea948a" stroke-width="1.8" fill="none"/><path d="M0.5 0.6h4M0.5 6.6h4" stroke="#f2d2cc" stroke-width="1.1" fill="none"/></svg>
<svg style="left:346.5px;top:549.15px;" width="5" height="7.2" viewBox="0 0 5 7.2"><path d="M2.5 0.6v6" stroke="#ea948a" stroke-width="1.8" fill="none"/><path d="M0.5 0.6h4M0.5 6.6h4" stroke="#f2d2cc" stroke-width="1.1" fill="none"/></svg>
<svg style="left:346.5px;top:558.9px;" width="5" height="7.2" viewBox="0 0 5 7.2"><path d="M2.5 0.6v6" stroke="#ea948a" stroke-width="1.8" fill="none"/><path d="M0.5 0.6h4M0.5 6.6h4" stroke="#f2d2cc" stroke-width="1.1" fill="none"/></svg>
<svg style="left:346.5px;top:568.65px;" width="5" height="7.2" viewBox="0 0 5 7.2"><path d="M2.5 0.6v6" stroke="#ea948a" stroke-width="1.8" fill="none"/><path d="M0.5 0.6h4M0.5 6.6h4" stroke="#f2d2cc" stroke-width="1.1" fill="none"/></svg>
<svg style="left:346.1px;top:579.2px;" width="5.8" height="5.8" viewBox="0 0 5.8 5.8"><path d="M2.9 0.3L5.5 2.9 2.9 5.5 0.3 2.9z" fill="#f0a020" stroke="#a05a10" stroke-width="0.5"/></svg>
<svg style="left:346.5px;top:588.15px;" width="5" height="7.2" viewBox="0 0 5 7.2"><path d="M2.5 0.6v6" stroke="#ea948a" stroke-width="1.8" fill="none"/><path d="M0.5 0.6h4M0.5 6.6h4" stroke="#f2d2cc" stroke-width="1.1" fill="none"/></svg>
<svg style="left:346.5px;top:597.9px;" width="5" height="7.2" viewBox="0 0 5 7.2"><path d="M2.5 0.6v6" stroke="#ea948a" stroke-width="1.8" fill="none"/><path d="M0.5 0.6h4M0.5 6.6h4" stroke="#f2d2cc" stroke-width="1.1" fill="none"/></svg>
<div style="left:850px;top:380px;width:10.2px;height:226px;background:#363636;"></div>
<div style="left:850px;top:380px;width:0.8px;height:226px;background:#282828;"></div>
<svg style="left:851.4px;top:380.2px;" width="8" height="9.4" viewBox="0 0 8 9.4"><path d="M0.5 0.5h6.6v5L3.8 8.8 0.5 5.5z" fill="#9a9a9a" stroke="#555" stroke-width="0.5"/></svg>
<svg style="left:851px;top:392px;" width="9" height="9" viewBox="0 0 9 9"><circle cx="3.6" cy="3.4" r="2.6" fill="none" stroke="#d0d0d0" stroke-width="0.9"/><path d="M1 8.4V5.6h4.6v2.8z" fill="#d0d0d0"/><path d="M6 3h2.4v4" stroke="#d0d0d0" stroke-width="0.7" fill="none"/></svg>
<svg style="left:852.4px;top:404px;" width="6" height="4" viewBox="0 0 6 4"><path d="M0 3.6h5.4L2.7 0.2z" fill="#d0d0d0"/></svg>
<div style="left:850.8px;top:410px;width:9.4px;height:30px;background:#2e2e2e;"></div>
<div style="left:850.8px;top:595.4px;width:9.4px;height:0.7px;background:#222;"></div>
<svg style="left:852.4px;top:599.6px;" width="6" height="4" viewBox="0 0 6 4"><path d="M0 0.2h5.4L2.7 3.6z" fill="#d0d0d0"/></svg>
<div style="left:1px;top:606px;width:859.2px;height:9px;background:#363636;"></div>
<div style="left:1.6px;top:605.6px;width:858.6px;height:0.8px;background:#1f1f1f;"></div>
<svg style="left:4px;top:607.8px;" width="8" height="7.4" viewBox="0 0 8 7.4"><rect x="0.4" y="1.6" width="5.4" height="5" fill="#888" stroke="#d2d2d2" stroke-width="0.7"/><circle cx="5" cy="2.4" r="2" fill="#d2d2d2"/></svg>
<svg style="left:14.4px;top:607.6px;" width="8.6" height="7.6" viewBox="0 0 8.6 7.6"><circle cx="3.6" cy="3.8" r="3.1" fill="none" stroke="#d2d2d2" stroke-width="0.9"/><path d="M3.6 3.8L5.6 1.6" stroke="#d2d2d2" stroke-width="0.9"/><rect x="5.6" y="4.6" width="2.8" height="2.6" fill="#d2d2d2"/></svg>
<svg style="left:25px;top:607.6px;" width="7" height="7.6" viewBox="0 0 7 7.6"><path d="M1.6 0.4C0.4 2.4 0.4 5 1.6 7.2M5 0.4c1.2 2 1.2 4.6 0 6.8" stroke="#d2d2d2" stroke-width="0.9" fill="none"/><path d="M2.4 2h1.8M2.4 5.4h1.8" stroke="#d2d2d2" stroke-width="0.8"/></svg>
<div style="left:187px;top:606.8px;width:78.4px;height:8.6px;background:linear-gradient(180deg,#484848,#3c3c3c);border:0.6px solid #262626;box-sizing:border-box;border-radius:1.5px;"></div>
<span class="t" style="left:192px;top:605.55px;line-height:12px;font-size:6.5px;color:#c8c8c8;letter-spacing:-0.126px;">Toggle Switches / Modes</span>
<svg style="left:349.6px;top:609.6px;" width="4.4" height="3" viewBox="0 0 4.4 3"><path d="M0 2.8L2.2 0.4 4.4 2.8z" fill="#9a9a9a"/></svg>
<div style="left:360px;top:610.6px;width:28px;height:1.6px;background:#1e1e1e;"></div>
<div style="left:360.4px;top:609.4px;width:3.2px;height:3.6px;background:#777;border-radius:1px;border:0.5px solid #222;box-sizing:border-box;"></div>
<svg style="left:393px;top:607.8px;" width="11" height="5" viewBox="0 0 11 5"><path d="M0 4.8L3 1.4 4.6 3 7 0.2 10.6 4.8z" fill="#b8b8b8"/></svg>
<svg style="left:410px;top:608.6px;" width="4" height="5" viewBox="0 0 4 5"><path d="M3.6 0v4.6L0.4 2.3z" fill="#5c5c5c"/></svg>
<div style="left:415px;top:607px;width:428px;height:8px;background:#2f2f2f;"></div>
<svg style="left:844.4px;top:608.6px;" width="4" height="5" viewBox="0 0 4 5"><path d="M0.4 0v4.6L3.6 2.3z" fill="#5c5c5c"/></svg>
<div style="left:865.5px;top:38.4px;width:43.5px;height:10.8px;background:#383838;border-top:0.6px solid #5a5a5a;border-left:0.6px solid #4a4a4a;border-radius:2px 2px 0 0;box-sizing:border-box;"></div>
<span class="t" style="left:870px;top:38.45px;line-height:12px;font-size:6.53px;color:#d2d2d2;">Paragraph</span>
<span class="t" style="left:903px;top:38.25px;line-height:12px;font-size:7.5px;color:#d2d2d2;">×</span>
<svg style="left:963px;top:41px;" width="10" height="6" viewBox="0 0 10 6"><path d="M0.5 1.5h3l-1.5 2z" fill="#bbb"/><rect x="4.2" y="0.5" width="4.6" height="4.6" fill="#9a9a9a"/></svg>
<div style="left:975.6px;top:38.5px;width:0.8px;height:10px;background:#1e1e1e;"></div>
<div style="left:881.6px;top:52.6px;width:11.6px;height:11.2px;background:#1c1c1c;border-radius:1.5px;"></div>
<svg style="left:869px;top:54px;" width="8" height="9" viewBox="0 0 8 9"><rect x="0" y="0.0" width="8" height="1.2" fill="#7a7a7a"/><rect x="0" y="1.5" width="5" height="1.2" fill="#7a7a7a"/><rect x="0" y="3.0" width="8" height="1.2" fill="#7a7a7a"/><rect x="0" y="4.5" width="5" height="1.2" fill="#7a7a7a"/><rect x="0" y="6.0" width="8" height="1.2" fill="#7a7a7a"/><rect x="0" y="7.5" width="4" height="1.2" fill="#7a7a7a"/></svg>
<svg style="left:883.4px;top:54px;" width="8" height="9" viewBox="0 0 8 9"><rect x="0.0" y="0.0" width="8" height="1.2" fill="#7a7a7a"/><rect x="1.5" y="1.5" width="5" height="1.2" fill="#7a7a7a"/><rect x="0.0" y="3.0" width="8" height="1.2" fill="#7a7a7a"/><rect x="1.5" y="4.5" width="5" height="1.2" fill="#7a7a7a"/><rect x="0.0" y="6.0" width="8" height="1.2" fill="#7a7a7a"/><rect x="2.0" y="7.5" width="4" height="1.2" fill="#7a7a7a"/></svg>
<svg style="left:898px;top:54px;" width="8" height="9" viewBox="0 0 8 9"><rect x="0" y="0.0" width="8" height="1.2" fill="#7a7a7a"/><rect x="3" y="1.5" width="5" height="1.2" fill="#7a7a7a"/><rect x="0" y="3.0" width="8" height="1.2" fill="#7a7a7a"/><rect x="3" y="4.5" width="5" height="1.2" fill="#7a7a7a"/><rect x="0" y="6.0" width="8" height="1.2" fill="#7a7a7a"/><rect x="4" y="7.5" width="4" height="1.2" fill="#7a7a7a"/></svg>
<div style="left:915px;top:54px;width:8px;height:7px;background:#5e5e5e;"></div>
<div style="left:915px;top:61px;width:5px;height:1.4px;background:#5e5e5e;"></div>
<div style="left:929.5px;top:54px;width:8px;height:7px;background:#5e5e5e;"></div>
<div style="left:931.5px;top:61px;width:5px;height:1.4px;background:#5e5e5e;"></div>
<div style="left:944px;top:54px;width:8px;height:7px;background:#5e5e5e;"></div>
<div style="left:947px;top:61px;width:5px;height:1.4px;background:#5e5e5e;"></div>
<div style="left:961px;top:54px;width:8px;height:7px;background:#5e5e5e;"></div>
<div style="left:961px;top:61px;width:8px;height:1.4px;background:#5e5e5e;"></div>
<div style="left:867px;top:67.2px;width:103px;height:0.7px;background:#2a2a2a;"></div>
<svg style="left:867px;top:70.3px;" width="11" height="7" viewBox="0 0 11 7"><path d="M0 3h3" stroke="#c8c8c8" stroke-width="0.8"/><rect x="4" y="0" width="6.6" height="0.9" fill="#9a9a9a"/><rect x="4" y="1.6" width="6.6" height="0.9" fill="#9a9a9a"/><rect x="4" y="3.2" width="6.6" height="0.9" fill="#9a9a9a"/><rect x="4" y="4.8" width="6.6" height="0.9" fill="#9a9a9a"/><rect x="4" y="6.2" width="4.6" height="0.8" fill="#9a9a9a"/></svg>
<span class="t" style="left:879.6px;top:67.95px;line-height:12px;font-size:7.2px;color:#dfa21f;text-decoration:underline;text-decoration-color:rgba(215,155,30,.6);text-underline-offset:0.8px;">0</span>
<span class="t" style="left:885.2px;top:67.95px;line-height:12px;font-size:7.2px;color:#d0d0d0;">px</span>
<svg style="left:907px;top:70.5px;" width="11" height="7" viewBox="0 0 11 7"><path d="M0 3h3" stroke="#c8c8c8" stroke-width="0.8"/><rect x="4" y="0" width="6.6" height="0.9" fill="#9a9a9a"/><rect x="4" y="1.6" width="6.6" height="0.9" fill="#9a9a9a"/><rect x="4" y="3.2" width="6.6" height="0.9" fill="#9a9a9a"/><rect x="4" y="4.8" width="6.6" height="0.9" fill="#9a9a9a"/><rect x="4" y="6.2" width="4.6" height="0.8" fill="#9a9a9a"/></svg>
<span class="t" style="left:921.6px;top:67.95px;line-height:12px;font-size:7.2px;color:#dfa21f;text-decoration:underline;text-decoration-color:rgba(215,155,30,.6);text-underline-offset:0.8px;">0</span>
<span class="t" style="left:927.2px;top:67.95px;line-height:12px;font-size:7.2px;color:#d0d0d0;">px</span>
<svg style="left:945px;top:69.89999999999999px;" width="11" height="7" viewBox="0 0 11 7"><path d="M0 3h3" stroke="#c8c8c8" stroke-width="0.8"/><rect x="4" y="0" width="6.6" height="0.9" fill="#9a9a9a"/><rect x="4" y="1.6" width="6.6" height="0.9" fill="#9a9a9a"/><rect x="4" y="3.2" width="6.6" height="0.9" fill="#9a9a9a"/><rect x="4" y="4.8" width="6.6" height="0.9" fill="#9a9a9a"/><rect x="4" y="6.2" width="4.6" height="0.8" fill="#9a9a9a"/></svg>
<span class="t" style="left:959px;top:67.95px;line-height:12px;font-size:7.2px;color:#dfa21f;text-decoration:underline;text-decoration-color:rgba(215,155,30,.6);text-underline-offset:0.8px;">0</span>
<span class="t" style="left:964.6px;top:67.95px;line-height:12px;font-size:7.2px;color:#d0d0d0;">px</span>
<svg style="left:866.6px;top:81.6px;" width="11" height="7" viewBox="0 0 11 7"><path d="M0 3h3" stroke="#c8c8c8" stroke-width="0.8"/><rect x="4" y="0" width="6.6" height="0.9" fill="#9a9a9a"/><rect x="4" y="1.6" width="6.6" height="0.9" fill="#9a9a9a"/><rect x="4" y="3.2" width="6.6" height="0.9" fill="#9a9a9a"/><rect x="4" y="4.8" width="6.6" height="0.9" fill="#9a9a9a"/><rect x="4" y="6.2" width="4.6" height="0.8" fill="#9a9a9a"/></svg>
<span class="t" style="left:879.6px;top:77.85px;line-height:12px;font-size:7.2px;color:#dfa21f;text-decoration:underline;text-decoration-color:rgba(215,155,30,.6);text-underline-offset:0.8px;">0</span>
<span class="t" style="left:885.2px;top:77.85px;line-height:12px;font-size:7.2px;color:#d0d0d0;">px</span>
<svg style="left:907px;top:81.39999999999999px;" width="11" height="7" viewBox="0 0 11 7"><path d="M0 3h3" stroke="#c8c8c8" stroke-width="0.8"/><rect x="4" y="0" width="6.6" height="0.9" fill="#9a9a9a"/><rect x="4" y="1.6" width="6.6" height="0.9" fill="#9a9a9a"/><rect x="4" y="3.2" width="6.6" height="0.9" fill="#9a9a9a"/><rect x="4" y="4.8" width="6.6" height="0.9" fill="#9a9a9a"/><rect x="4" y="6.2" width="4.6" height="0.8" fill="#9a9a9a"/></svg>
<span class="t" style="left:921.6px;top:78.75px;line-height:12px;font-size:7.2px;color:#dfa21f;text-decoration:underline;text-decoration-color:rgba(215,155,30,.6);text-underline-offset:0.8px;">0</span>
<span class="t" style="left:927.2px;top:78.75px;line-height:12px;font-size:7.2px;color:#d0d0d0;">px</span>
<div style="left:865.5px;top:97.2px;width:42.8px;height:10.8px;background:#383838;border-top:0.6px solid #5a5a5a;border-left:0.6px solid #4a4a4a;border-radius:2px 2px 0 0;box-sizing:border-box;"></div>
<span class="t" style="left:870px;top:97.25px;line-height:12px;font-size:6.5px;color:#d2d2d2;letter-spacing:-0.004px;">Character</span>
<span class="t" style="left:902.5px;top:97.05px;line-height:12px;font-size:7.5px;color:#d2d2d2;">×</span>
<svg style="left:963px;top:99.8px;" width="10" height="6" viewBox="0 0 10 6"><path d="M0.5 1.5h3l-1.5 2z" fill="#bbb"/><rect x="4.2" y="0.5" width="4.6" height="4.6" fill="#9a9a9a"/></svg>
<div style="left:975.6px;top:97.3px;width:0.8px;height:10px;background:#1e1e1e;"></div>
<div style="left:867.4px;top:114px;width:68.6px;height:9.4px;background:#3a3a3a;border:0.7px solid #202020;box-sizing:border-box;border-radius:1.5px;"></div>
<div style="left:868.1999999999999px;top:114.9px;width:56.599999999999994px;height:7.6000000000000005px;background:#9b9b9b;"></div>
<span class="t" style="left:869.1999999999999px;top:113.25px;line-height:12px;font-size:6.81px;color:#151515;-webkit-text-stroke:0;">Futura LT</span>
<svg style="left:927.6px;top:116.9px;" width="5" height="4" viewBox="0 0 5 4"><path d="M0.3 0.3h4.2L2.4 3.4z" fill="#c8c8c8"/></svg>
<div style="left:867.4px;top:127.6px;width:68.6px;height:9.4px;background:#3a3a3a;border:0.7px solid #202020;box-sizing:border-box;border-radius:1.5px;"></div>
<div style="left:868.1999999999999px;top:128.5px;width:56.599999999999994px;height:7.6000000000000005px;background:#9b9b9b;"></div>
<span class="t" style="left:869.1999999999999px;top:126.85px;line-height:12px;font-size:6.5px;color:#151515;-webkit-text-stroke:0;letter-spacing:-0.085px;">Heavy</span>
<svg style="left:927.6px;top:130.49999999999997px;" width="5" height="4" viewBox="0 0 5 4"><path d="M0.3 0.3h4.2L2.4 3.4z" fill="#c8c8c8"/></svg>
<svg style="left:940px;top:114.6px;" width="10" height="9.4" viewBox="0 0 10 9.4"><path d="M8.6 0.6L3.4 6.2" stroke="#cfcfcf" stroke-width="1.3"/><path d="M3.4 6.2L0.8 9" stroke="#9a9a9a" stroke-width="1"/></svg>
<div style="left:961px;top:121px;width:17px;height:16.4px;background:#fff;"></div>
<div style="left:964.6px;top:124.6px;width:9.8px;height:9.2px;background:#333;"></div>
<svg style="left:961px;top:121px;" width="17" height="16.4" viewBox="0 0 17 16.4"><path d="M0.6 16L16.6 0.6" stroke="#d81414" stroke-width="1.4"/></svg>
<div style="left:954.2px;top:113.5px;width:16.2px;height:16.3px;background:#fff;border:0.6px solid #444;box-sizing:border-box;"></div>
<div style="left:939.5px;top:128px;width:11px;height:4.5px;background:#000;"></div>
<div style="left:939.5px;top:132.5px;width:11px;height:4.5px;background:#fff;"></div>
<div style="left:953.6px;top:131.4px;width:5.8px;height:5.8px;background:#fff;"></div>
<svg style="left:953.6px;top:131.4px;" width="5.8" height="5.8" viewBox="0 0 5.8 5.8"><path d="M0.4 5.4L5.4 0.4" stroke="#d81414" stroke-width="1.2"/></svg>
<svg style="left:972px;top:113.6px;" width="6" height="6" viewBox="0 0 6 6"><path d="M0.8 1.2h2.6a1.6 1.6 0 0 1 1.6 1.6v2.4" stroke="#ddd" stroke-width="0.8" fill="none"/><path d="M0.2 1.2L1.8 0v2.4zM5 5.8L3.8 4.2h2.4z" fill="#ddd"/></svg>
<div style="left:867px;top:140.3px;width:111px;height:0.7px;background:#2a2a2a;"></div>
<span class="t" style="left:867px;top:143.05px;line-height:12px;font-size:6.5px;color:#d0d0d0;font-family:'Liberation Serif',serif;">T</span>
<span class="t" style="left:870.4px;top:142.05px;line-height:12px;font-size:10.5px;color:#d0d0d0;font-family:'Liberation Serif',serif;">T</span>
<span class="t" style="left:880.5px;top:142.55px;line-height:12px;font-size:7.2px;color:#dfa21f;text-decoration:underline;text-decoration-color:rgba(215,155,30,.6);text-underline-offset:0.8px;">146</span>
<span class="t" style="left:894px;top:142.55px;line-height:12px;font-size:7.2px;color:#d0d0d0;">px</span>
<svg style="left:906.2px;top:146.5px;" width="5" height="4" viewBox="0 0 5 4"><path d="M0.3 0.3h4.2L2.4 3.4z" fill="#c8c8c8"/></svg>
<svg style="left:928px;top:143.4px;" width="8" height="10" viewBox="0 0 8 10"><path d="M4 0L2.4 2h3.2zM4 9.8L2.4 7.8h3.2z" fill="#bdbdbd"/></svg>
<span class="t" style="left:929.4px;top:140.45px;line-height:12px;font-size:5.6px;color:#cfcfcf;">A</span>
<span class="t" style="left:929.4px;top:145.45px;line-height:12px;font-size:5.6px;color:#cfcfcf;">A</span>
<span class="t" style="left:945px;top:142.55px;line-height:12px;font-size:7.2px;color:#dfa21f;text-decoration:underline;text-decoration-color:rgba(215,155,30,.6);text-underline-offset:0.8px;">129</span>
<span class="t" style="left:958.6px;top:142.55px;line-height:12px;font-size:7.2px;color:#d0d0d0;">px</span>
<svg style="left:970.8px;top:146.5px;" width="5" height="4" viewBox="0 0 5 4"><path d="M0.3 0.3h4.2L2.4 3.4z" fill="#c8c8c8"/></svg>
<span class="t" style="left:866.6px;top:154.85px;line-height:12px;font-size:6px;color:#cfcfcf;letter-spacing:-0.8px;font-style:italic;">AV</span>
<div style="left:868px;top:164.4px;width:6px;height:0.6px;background:#bbb;"></div>
<span class="t" style="left:881px;top:154.25px;line-height:12px;font-size:7.2px;color:#6a6a6a;">Optical</span>
<svg style="left:906.2px;top:158.2px;" width="5" height="4" viewBox="0 0 5 4"><path d="M0.3 0.3h4.2L2.4 3.4z" fill="#c8c8c8"/></svg>
<span class="t" style="left:928.6px;top:152.85px;line-height:12px;font-size:6.4px;color:#e0e0e0;font-weight:bold;letter-spacing:-0.6px;">AV</span>
<svg style="left:928.6px;top:162.4px;" width="9" height="3" viewBox="0 0 9 3"><path d="M0.2 1.5h8.4M0.2 1.5l1.6-1.3M0.2 1.5l1.6 1.3M8.6 1.5L7 0.2M8.6 1.5L7 2.8" stroke="#d0d0d0" stroke-width="0.6" fill="none"/></svg>
<span class="t" style="left:945px;top:154.25px;line-height:12px;font-size:7.2px;color:#dfa21f;text-decoration:underline;text-decoration-color:rgba(215,155,30,.6);text-underline-offset:0.8px;">0</span>
<svg style="left:970.8px;top:158.2px;" width="5" height="4" viewBox="0 0 5 4"><path d="M0.3 0.3h4.2L2.4 3.4z" fill="#c8c8c8"/></svg>
<div style="left:867px;top:169.2px;width:111px;height:0.7px;background:#2a2a2a;"></div>
<svg style="left:867px;top:174.6px;" width="9.4" height="7" viewBox="0 0 9.4 7"><path d="M0 0.6h9.4M0 3.4h9.4M0 6.2h9.4" stroke="#d4d4d4" stroke-width="1"/></svg>
<span class="t" style="left:880.5px;top:172.25px;line-height:12px;font-size:7.2px;color:#dfa21f;text-decoration:underline;text-decoration-color:rgba(215,155,30,.6);text-underline-offset:0.8px;">–</span>
<span class="t" style="left:886px;top:172.25px;line-height:12px;font-size:7.2px;color:#d0d0d0;">px</span>
<svg style="left:906.2px;top:176.2px;" width="5" height="4" viewBox="0 0 5 4"><path d="M0.3 0.3h4.2L2.4 3.4z" fill="#c8c8c8"/></svg>
<div style="left:913px;top:173.4px;width:65px;height:9.4px;background:linear-gradient(180deg,#454545,#383838);border:0.7px solid #1e1e1e;box-sizing:border-box;border-radius:1.5px;"></div>
<svg style="left:970.6px;top:176.29999999999998px;" width="5" height="4" viewBox="0 0 5 4"><path d="M0.3 0.3h4.2L2.4 3.4z" fill="#d0d0d0"/></svg>
<div style="left:967px;top:174.4px;width:0.6px;height:7.4px;background:#242424;"></div>
<div style="left:867px;top:187.4px;width:111px;height:0.7px;background:#2a2a2a;"></div>
<svg style="left:866.8px;top:191.4px;" width="3" height="8.6" viewBox="0 0 3 8.6"><path d="M1.5 0.2v8.2M0.2 1.6L1.5 0.2 2.8 1.6M0.2 7L1.5 8.4 2.8 7" stroke="#cfcfcf" stroke-width="0.6" fill="none"/></svg>
<span class="t" style="left:870px;top:189.45px;line-height:12px;font-size:11px;color:#d8d8d8;font-family:'Liberation Serif',serif;">T</span>
<span class="t" style="left:880.5px;top:189.85px;line-height:12px;font-size:7.2px;color:#dfa21f;text-decoration:underline;text-decoration-color:rgba(215,155,30,.6);text-underline-offset:0.8px;">100</span>
<span class="t" style="left:894px;top:189.85px;line-height:12px;font-size:7.2px;color:#d0d0d0;">%</span>
<svg style="left:906.2px;top:193.79999999999998px;" width="5" height="4" viewBox="0 0 5 4"><path d="M0.3 0.3h4.2L2.4 3.4z" fill="#c8c8c8"/></svg>
<span class="t" style="left:927.6px;top:188.45px;line-height:12px;font-size:11px;color:#e0e0e0;font-weight:bold;font-family:'Liberation Serif',serif;transform:scaleX(1.25);transform-origin:0 50%;">T</span>
<svg style="left:928px;top:199.4px;" width="9.4" height="3" viewBox="0 0 9.4 3"><path d="M0.2 1.5h9M0.2 1.5l1.6-1.3M0.2 1.5l1.6 1.3M9.2 1.5L7.6 0.2M9.2 1.5L7.6 2.8" stroke="#d0d0d0" stroke-width="0.6" fill="none"/></svg>
<span class="t" style="left:945px;top:189.85px;line-height:12px;font-size:7.2px;color:#dfa21f;text-decoration:underline;text-decoration-color:rgba(215,155,30,.6);text-underline-offset:0.8px;">100</span>
<span class="t" style="left:958.6px;top:189.85px;line-height:12px;font-size:7.2px;color:#d0d0d0;">%</span>
<svg style="left:970.8px;top:193.79999999999998px;" width="5" height="4" viewBox="0 0 5 4"><path d="M0.3 0.3h4.2L2.4 3.4z" fill="#c8c8c8"/></svg>
<span class="t" style="left:867px;top:203.05px;line-height:12px;font-size:6.4px;color:#cfcfcf;">A</span>
<span class="t" style="left:871.6px;top:200.65px;line-height:12px;font-size:5.4px;color:#cfcfcf;">a</span>
<svg style="left:872.2px;top:208.6px;" width="3" height="4" viewBox="0 0 3 4"><path d="M1.5 0v3.8M0.3 1.2L1.5 0 2.7 1.2" stroke="#cfcfcf" stroke-width="0.6" fill="none"/></svg>
<span class="t" style="left:880.5px;top:202.45px;line-height:12px;font-size:7.2px;color:#dfa21f;text-decoration:underline;text-decoration-color:rgba(215,155,30,.6);text-underline-offset:0.8px;">0</span>
<span class="t" style="left:886px;top:202.45px;line-height:12px;font-size:7.2px;color:#d0d0d0;">px</span>
<svg style="left:906.2px;top:206.39999999999998px;" width="5" height="4" viewBox="0 0 5 4"><path d="M0.3 0.3h4.2L2.4 3.4z" fill="#c8c8c8"/></svg>
<svg style="left:929px;top:204px;" width="8" height="9" viewBox="0 0 8 9"><rect x="0.8" y="0.6" width="6" height="5.6" fill="none" stroke="#8a8a8a" stroke-width="0.6" stroke-dasharray="1 0.8"/><path d="M2.4 4.6L3.8 1.6 5.2 4.6" stroke="#aaa" stroke-width="0.6" fill="none"/><path d="M0.2 8h2.6M5 8h2.6" stroke="#aaa" stroke-width="0.7"/></svg>
<span class="t" style="left:945px;top:202.45px;line-height:12px;font-size:7.2px;color:#dfa21f;text-decoration:underline;text-decoration-color:rgba(215,155,30,.6);text-underline-offset:0.8px;">0</span>
<span class="t" style="left:950.6px;top:202.45px;line-height:12px;font-size:7.2px;color:#d0d0d0;">%</span>
<svg style="left:970.8px;top:206.39999999999998px;" width="5" height="4" viewBox="0 0 5 4"><path d="M0.3 0.3h4.2L2.4 3.4z" fill="#c8c8c8"/></svg>
<div style="left:867px;top:217px;width:111px;height:0.7px;background:#2a2a2a;"></div>
<div style="left:909px;top:221px;width:14px;height:10.6px;background:#1c1c1c;border:0.6px solid #0e0e0e;box-sizing:border-box;border-radius:1px;"></div>
<span class="t" style="left:882px;top:220.85px;line-height:12px;font-size:9px;color:#e8e8e8;font-weight:bold;font-family:'Liberation Serif',serif;">T</span>
<span class="t" style="left:896px;top:220.85px;line-height:12px;font-size:9px;color:#e8e8e8;font-weight:bold;font-family:'Liberation Serif',serif;font-style:italic;">T</span>
<span class="t" style="left:911px;top:220.85px;line-height:12px;font-size:8.6px;color:#e8e8e8;font-weight:bold;font-family:'Liberation Serif',serif;">TT</span>
<span class="t" style="left:927px;top:220.85px;line-height:12px;font-size:9px;color:#e8e8e8;font-weight:bold;font-family:'Liberation Serif',serif;">T</span>
<span class="t" style="left:932px;top:221.65px;line-height:12px;font-size:6px;color:#e8e8e8;font-weight:bold;font-family:'Liberation Serif',serif;">T</span>
<span class="t" style="left:945px;top:220.85px;line-height:12px;font-size:9px;color:#e8e8e8;font-weight:bold;font-family:'Liberation Serif',serif;">T</span>
<span class="t" style="left:950.2px;top:218.25px;line-height:12px;font-size:4.6px;color:#e8e8e8;font-family:'Liberation Serif',serif;">1</span>
<span class="t" style="left:959px;top:220.85px;line-height:12px;font-size:9px;color:#e8e8e8;font-weight:bold;font-family:'Liberation Serif',serif;">T</span>
<span class="t" style="left:964.2px;top:223.25px;line-height:12px;font-size:4.6px;color:#e8e8e8;font-family:'Liberation Serif',serif;">1</span>
<div style="left:865.5px;top:237.4px;width:35px;height:10.8px;background:#383838;border-top:0.6px solid #5a5a5a;border-left:0.6px solid #4a4a4a;border-radius:2px 2px 0 0;box-sizing:border-box;"></div>
<span class="t" style="left:870px;top:237.45px;line-height:12px;font-size:6.86px;color:#d2d2d2;">Tracker</span>
<span class="t" style="left:895.5px;top:237.25px;line-height:12px;font-size:7.5px;color:#d2d2d2;">×</span>
<svg style="left:963px;top:240px;" width="10" height="6" viewBox="0 0 10 6"><path d="M0.5 1.5h3l-1.5 2z" fill="#bbb"/><rect x="4.2" y="0.5" width="4.6" height="4.6" fill="#9a9a9a"/></svg>
<div style="left:975.6px;top:237.5px;width:0.8px;height:10px;background:#1e1e1e;"></div>
<div style="left:868.7px;top:254px;width:52.8px;height:9.4px;background:#3a3a3a;border:0.7px solid #2e2e2e;box-sizing:border-box;border-radius:1.5px;"></div>
<span class="t" style="left:874px;top:253.15px;line-height:12px;font-size:6.67px;color:#6a6a6a;">Track Camera</span>
<div style="left:925.3px;top:254px;width:52.2px;height:9.4px;background:#3a3a3a;border:0.7px solid #2e2e2e;box-sizing:border-box;border-radius:1.5px;"></div>
<span class="t" style="left:928px;top:253.15px;line-height:12px;font-size:6.82px;color:#6a6a6a;">Warp Stabilizer</span>
<div style="left:868.7px;top:268.8px;width:52.8px;height:9.4px;background:#3a3a3a;border:0.7px solid #2e2e2e;box-sizing:border-box;border-radius:1.5px;"></div>
<span class="t" style="left:875px;top:267.95px;line-height:12px;font-size:6.97px;color:#6a6a6a;">Track Motion</span>
<div style="left:925.3px;top:268.8px;width:52.2px;height:9.4px;background:#3a3a3a;border:0.7px solid #2e2e2e;box-sizing:border-box;border-radius:1.5px;"></div>
<span class="t" style="left:926.2px;top:267.95px;line-height:12px;font-size:7.03px;color:#6a6a6a;">Stabilize Motion</span>
<span class="t" style="left:866px;top:281.25px;line-height:12px;font-size:6.84px;color:#d6d6d6;">Motion Source:</span>
<div style="left:913.3px;top:282.3px;width:63.7px;height:9px;background:linear-gradient(180deg,#454545,#383838);border:0.7px solid #1e1e1e;box-sizing:border-box;border-radius:1.5px;"></div>
<span class="t" style="left:917.5px;top:281.25px;line-height:12px;font-size:6.5px;color:#d2d2d2;letter-spacing:-0.01px;">None</span>
<svg style="left:969.6px;top:285.0px;" width="5" height="4" viewBox="0 0 5 4"><path d="M0.3 0.3h4.2L2.4 3.4z" fill="#d0d0d0"/></svg>
<div style="left:966.0px;top:283.3px;width:0.6px;height:7px;background:#242424;"></div>
<span class="t" style="left:867.5px;top:294.75px;line-height:12px;font-size:7.02px;color:#6a6a6a;">Current Track:</span>
<div style="left:913.3px;top:296px;width:63.7px;height:9px;background:linear-gradient(180deg,#3f3f3f,#373737);border:0.7px solid #2e2e2e;box-sizing:border-box;border-radius:1.5px;"></div>
<span class="t" style="left:917.5px;top:294.95px;line-height:12px;font-size:6.5px;color:#6a6a6a;letter-spacing:-0.01px;">None</span>
<svg style="left:969.6px;top:298.7px;" width="5" height="4" viewBox="0 0 5 4"><path d="M0.3 0.3h4.2L2.4 3.4z" fill="#5c5c5c"/></svg>
<span class="t" style="left:876.5px;top:307.85px;line-height:12px;font-size:6.87px;color:#6a6a6a;">Track Type:</span>
<div style="left:913.3px;top:309.2px;width:63.7px;height:9px;background:linear-gradient(180deg,#3f3f3f,#373737);border:0.7px solid #2e2e2e;box-sizing:border-box;border-radius:1.5px;"></div>
<span class="t" style="left:917px;top:308.15px;line-height:12px;font-size:6.88px;color:#6a6a6a;">Stabilize</span>
<svg style="left:969.6px;top:311.9px;" width="5" height="4" viewBox="0 0 5 4"><path d="M0.3 0.3h4.2L2.4 3.4z" fill="#5c5c5c"/></svg>
<svg style="left:869.6px;top:322.4px;" width="7" height="6" viewBox="0 0 7 6"><path d="M0.6 3.2L2.4 5.2 6.2 0.4" stroke="#5e5e5e" stroke-width="1" fill="none"/></svg>
<span class="t" style="left:878.5px;top:320.25px;line-height:12px;font-size:6.89px;color:#6a6a6a;">Position</span>
<div style="left:908px;top:323px;width:6px;height:6px;background:#3c3c3c;border:0.6px solid #2e2e2e;box-sizing:border-box;"></div>
<span class="t" style="left:917.5px;top:320.25px;line-height:12px;font-size:6.85px;color:#6a6a6a;">Rotation</span>
<div style="left:946.5px;top:323px;width:6px;height:6px;background:#3c3c3c;border:0.6px solid #2e2e2e;box-sizing:border-box;"></div>
<span class="t" style="left:955px;top:320.25px;line-height:12px;font-size:6.5px;color:#6a6a6a;letter-spacing:-0.052px;">Scale</span>
<span class="t" style="left:867px;top:332.85px;line-height:12px;font-size:6.96px;color:#6a6a6a;">Motion Target:</span>
<div style="left:870.4px;top:345.2px;width:50.5px;height:9.8px;background:#3a3a3a;border:0.7px solid #2e2e2e;box-sizing:border-box;border-radius:1.5px;"></div>
<span class="t" style="left:875.5px;top:344.55px;line-height:12px;font-size:7.24px;color:#6a6a6a;">Edit Target...</span>
<div style="left:927.2px;top:345.2px;width:48.5px;height:9.8px;background:#3a3a3a;border:0.7px solid #2e2e2e;box-sizing:border-box;border-radius:1.5px;"></div>
<span class="t" style="left:936px;top:344.55px;line-height:12px;font-size:7.01px;color:#6a6a6a;">Options...</span>
<span class="t" style="left:881px;top:358.95px;line-height:12px;font-size:6.78px;color:#6a6a6a;">Analyze:</span>
<svg style="left:915px;top:361.8px;" width="8" height="6" viewBox="0 0 8 6"><path d="M5.4 0v5.8L0.8 2.9z" fill="#5c5c5c"/><rect x="6.2" y="0" width="1.2" height="5.8" fill="#5c5c5c"/></svg>
<svg style="left:931px;top:361.8px;" width="6" height="6" viewBox="0 0 6 6"><path d="M5.4 0v5.8L0.6 2.9z" fill="#5c5c5c"/></svg>
<svg style="left:945px;top:361.8px;" width="6" height="6" viewBox="0 0 6 6"><path d="M0.6 0v5.8L5.4 2.9z" fill="#5c5c5c"/></svg>
<svg style="left:960px;top:361.8px;" width="8" height="6" viewBox="0 0 8 6"><rect x="0.4" y="0" width="1.2" height="5.8" fill="#5c5c5c"/><path d="M2.4 0v5.8L7 2.9z" fill="#5c5c5c"/></svg>
<div style="left:870.4px;top:374.4px;width:49.6px;height:10px;background:#3a3a3a;border:0.7px solid #2e2e2e;box-sizing:border-box;border-radius:1.5px;"></div>
<span class="t" style="left:886.5px;top:373.85px;line-height:12px;font-size:6.5px;color:#6a6a6a;letter-spacing:-0.096px;">Reset</span>
<div style="left:927.2px;top:374.4px;width:49.3px;height:10px;background:#3a3a3a;border:0.7px solid #2e2e2e;box-sizing:border-box;border-radius:1.5px;"></div>
<span class="t" style="left:943px;top:373.85px;line-height:12px;font-size:7.2px;color:#6a6a6a;">Apply</span>
<div style="left:986px;top:38.4px;width:24.5px;height:10.8px;background:#383838;border-top:0.6px solid #5a5a5a;border-left:0.6px solid #4a4a4a;border-radius:2px 2px 0 0;box-sizing:border-box;"></div>
<span class="t" style="left:990.5px;top:38.45px;line-height:12px;font-size:7.2px;color:#d2d2d2;">Info</span>
<span class="t" style="left:1005px;top:38.25px;line-height:12px;font-size:7.5px;color:#d2d2d2;">×</span>
<span class="t" style="left:1017.5px;top:38.15px;line-height:12px;font-size:6.84px;color:#616161;">Audio</span>
<div style="left:1044px;top:38.5px;width:0.8px;height:10px;background:#1e1e1e;"></div>
<svg style="left:1084px;top:41px;" width="10" height="6" viewBox="0 0 10 6"><path d="M0.5 1.5h3l-1.5 2z" fill="#bbb"/><rect x="4.2" y="0.5" width="4.6" height="4.6" fill="#9a9a9a"/></svg>
<div style="left:1096.6px;top:38.5px;width:0.8px;height:10px;background:#1e1e1e;"></div>
<div style="left:989px;top:59.3px;width:11px;height:11px;background:#000;"></div>
<span class="t" style="left:1003px;top:49.95px;line-height:12px;font-size:7.2px;color:#d4d4d4;font-weight:bold;white-space:pre;">R :</span>
<span class="t" style="left:1003px;top:57.55px;line-height:12px;font-size:7.2px;color:#d4d4d4;font-weight:bold;white-space:pre;">G :</span>
<span class="t" style="left:1003px;top:64.95px;line-height:12px;font-size:7.2px;color:#d4d4d4;font-weight:bold;white-space:pre;">B :</span>
<span class="t" style="left:1003px;top:72.75px;line-height:12px;font-size:7.2px;color:#d4d4d4;font-weight:bold;white-space:pre;">A :  0</span>
<div style="left:1042.3px;top:53px;width:0.7px;height:29px;background:#2a2a2a;"></div>
<svg style="left:1047px;top:63.8px;" width="5.6" height="5.6" viewBox="0 0 5.6 5.6"><path d="M2.8 0v5.6M0 2.8h5.6" stroke="#c8c8c8" stroke-width="0.7"/></svg>
<span class="t" style="left:1055px;top:49.95px;line-height:12px;font-size:7.2px;color:#d4d4d4;font-weight:bold;">X : 616</span>
<span class="t" style="left:1055px;top:57.55px;line-height:12px;font-size:7.2px;color:#d4d4d4;font-weight:bold;">Y : 976</span>
<div style="left:987px;top:85.2px;width:111px;height:0.7px;background:#2a2a2a;"></div>
<div style="left:986px;top:118.2px;width:36px;height:10.8px;background:#383838;border-top:0.6px solid #5a5a5a;border-left:0.6px solid #4a4a4a;border-radius:2px 2px 0 0;box-sizing:border-box;"></div>
<span class="t" style="left:990.5px;top:118.25px;line-height:12px;font-size:6.5px;color:#d2d2d2;letter-spacing:-0.017px;">Preview</span>
<span class="t" style="left:1016.5px;top:118.05px;line-height:12px;font-size:7.5px;color:#d2d2d2;">×</span>
<svg style="left:1084px;top:120.8px;" width="10" height="6" viewBox="0 0 10 6"><path d="M0.5 1.5h3l-1.5 2z" fill="#bbb"/><rect x="4.2" y="0.5" width="4.6" height="4.6" fill="#9a9a9a"/></svg>
<div style="left:1096.6px;top:118.3px;width:0.8px;height:10px;background:#1e1e1e;"></div>
<svg style="left:990.5px;top:134.2px;" width="8" height="6" viewBox="0 0 8 6"><rect x="0.2" y="0" width="1.3" height="6" fill="#cfcfcf"/><path d="M7.4 0v6L2 3z" fill="#cfcfcf"/></svg>
<svg style="left:1004px;top:134.2px;" width="8" height="6" viewBox="0 0 8 6"><path d="M5 0v6L0.2 3z" fill="#cfcfcf"/><rect x="6" y="0" width="1.3" height="6" fill="#cfcfcf"/></svg>
<svg style="left:1018px;top:134.0px;" width="7" height="6.4" viewBox="0 0 7 6.4"><path d="M0.4 0v6.4L6 3.2z" fill="#cfcfcf"/></svg>
<svg style="left:1031.5px;top:134.2px;" width="8" height="6" viewBox="0 0 8 6"><rect x="0.2" y="0" width="1.3" height="6" fill="#cfcfcf"/><path d="M2.6 0v6L7.4 3z" fill="#cfcfcf"/></svg>
<svg style="left:1045.5px;top:134.2px;" width="8" height="6" viewBox="0 0 8 6"><path d="M0.2 0v6L5.6 3z" fill="#cfcfcf"/><rect x="6" y="0" width="1.3" height="6" fill="#cfcfcf"/></svg>
<svg style="left:1061px;top:133.79999999999998px;" width="8.4" height="6.8" viewBox="0 0 8.4 6.8"><path d="M0.2 2.2h1.6L4.2 0.2v6.4L1.8 4.6H0.2z" fill="#cfcfcf"/><path d="M5.4 0.6a3 3 0 0 1 0 5.6z" fill="#cfcfcf"/></svg>
<svg style="left:1077px;top:133.6px;" width="8.6" height="7.2" viewBox="0 0 8.6 7.2"><path d="M0.6 2.6v4h7.2v-4M0.6 2.6h4" stroke="#cfcfcf" stroke-width="1.1" fill="none"/><path d="M4.4 0.2v4.6L7.6 2.5z" fill="#cfcfcf"/></svg>
<svg style="left:1091px;top:134.2px;" width="10" height="6" viewBox="0 0 10 6"><rect x="0" y="0" width="3.4" height="6" fill="#8a8a8a"/><path d="M4 0v6L9.4 3z" fill="#cfcfcf"/></svg>
<div style="left:986px;top:147.8px;width:42px;height:10.8px;background:#383838;border-top:0.6px solid #5a5a5a;border-left:0.6px solid #4a4a4a;border-radius:2px 2px 0 0;box-sizing:border-box;"></div>
<span class="t" style="left:990px;top:147.85px;line-height:12px;font-size:6.8px;color:#d2d2d2;">Smoother</span>
<span class="t" style="left:1022.5px;top:147.65px;line-height:12px;font-size:7.5px;color:#d2d2d2;">×</span>
<svg style="left:1084px;top:150.4px;" width="10" height="6" viewBox="0 0 10 6"><path d="M0.5 1.5h3l-1.5 2z" fill="#bbb"/><rect x="4.2" y="0.5" width="4.6" height="4.6" fill="#9a9a9a"/></svg>
<div style="left:1096.6px;top:147.9px;width:0.8px;height:10px;background:#1e1e1e;"></div>
<span class="t" style="left:992.5px;top:164.15px;line-height:12px;font-size:7.08px;color:#d2d2d2;">Apply To:</span>
<div style="left:1026px;top:165.2px;width:72px;height:9.4px;background:linear-gradient(180deg,#3f3f3f,#373737);border:0.7px solid #2e2e2e;box-sizing:border-box;border-radius:1.5px;"></div>
<span class="t" style="left:1030px;top:164.35px;line-height:12px;font-size:6.83px;color:#6a6a6a;">Temporal Graph</span>
<svg style="left:1090.6px;top:168.09999999999997px;" width="5" height="4" viewBox="0 0 5 4"><path d="M0.3 0.3h4.2L2.4 3.4z" fill="#5c5c5c"/></svg>
<span class="t" style="left:991px;top:176.75px;line-height:12px;font-size:6.83px;color:#d2d2d2;">Tolerance:</span>
<span class="t" style="left:1027px;top:176.75px;line-height:12px;font-size:7.6px;color:#dfa21f;text-decoration:underline;text-decoration-color:rgba(215,155,30,.6);text-underline-offset:0.8px;">1</span>
<div style="left:1059.5px;top:190px;width:38.5px;height:9.6px;background:#3a3a3a;border:0.7px solid #2e2e2e;box-sizing:border-box;border-radius:1.5px;"></div>
<span class="t" style="left:1070px;top:189.25px;line-height:12px;font-size:7.2px;color:#6a6a6a;">Apply</span>
<div style="left:986px;top:205.20000000000002px;width:35.6px;height:10.8px;background:#383838;border-top:0.6px solid #5a5a5a;border-left:0.6px solid #4a4a4a;border-radius:2px 2px 0 0;box-sizing:border-box;"></div>
<span class="t" style="left:990px;top:205.25px;line-height:12px;font-size:6.79px;color:#d2d2d2;">Wiggler</span>
<span class="t" style="left:1016.5px;top:205.05px;line-height:12px;font-size:7.5px;color:#d2d2d2;">×</span>
<svg style="left:1084px;top:207.8px;" width="10" height="6" viewBox="0 0 10 6"><path d="M0.5 1.5h3l-1.5 2z" fill="#bbb"/><rect x="4.2" y="0.5" width="4.6" height="4.6" fill="#9a9a9a"/></svg>
<div style="left:1096.6px;top:205.3px;width:0.8px;height:10px;background:#1e1e1e;"></div>
<span class="t" style="left:995.5px;top:220.55px;line-height:12px;font-size:6.96px;color:#d2d2d2;">Apply To:</span>
<div style="left:1028.5px;top:221.6px;width:69.5px;height:9.4px;background:linear-gradient(180deg,#3f3f3f,#373737);border:0.7px solid #2e2e2e;box-sizing:border-box;border-radius:1.5px;"></div>
<span class="t" style="left:1031.5px;top:220.75px;line-height:12px;font-size:6.9px;color:#6a6a6a;">Temporal Graph</span>
<svg style="left:1090.6px;top:224.49999999999997px;" width="5" height="4" viewBox="0 0 5 4"><path d="M0.3 0.3h4.2L2.4 3.4z" fill="#5c5c5c"/></svg>
<span class="t" style="left:989px;top:233.05px;line-height:12px;font-size:6.65px;color:#d2d2d2;">Noise Type:</span>
<div style="left:1028.5px;top:234.1px;width:69.5px;height:9.4px;background:linear-gradient(180deg,#454545,#383838);border:0.7px solid #1e1e1e;box-sizing:border-box;border-radius:1.5px;"></div>
<span class="t" style="left:1031.5px;top:233.25px;line-height:12px;font-size:6.67px;color:#d2d2d2;">Smooth</span>
<svg style="left:1090.6px;top:236.99999999999997px;" width="5" height="4" viewBox="0 0 5 4"><path d="M0.3 0.3h4.2L2.4 3.4z" fill="#d0d0d0"/></svg>
<div style="left:1087.0px;top:235.1px;width:0.6px;height:7.4px;background:#242424;"></div>
<span class="t" style="left:987px;top:245.55px;line-height:12px;font-size:6.73px;color:#6a6a6a;">Dimensions:</span>
<div style="left:1028.5px;top:246.6px;width:69.5px;height:9.4px;background:linear-gradient(180deg,#3f3f3f,#373737);border:0.7px solid #2e2e2e;box-sizing:border-box;border-radius:1.5px;"></div>
<span class="t" style="left:1031.5px;top:245.75px;line-height:12px;font-size:6.11px;color:#6a6a6a;">–</span>
<svg style="left:1090.6px;top:249.49999999999997px;" width="5" height="4" viewBox="0 0 5 4"><path d="M0.3 0.3h4.2L2.4 3.4z" fill="#5c5c5c"/></svg>
<span class="t" style="left:991px;top:258.55px;line-height:12px;font-size:6.6px;color:#d2d2d2;">Frequency:</span>
<span class="t" style="left:1028.5px;top:258.55px;line-height:12px;font-size:6.83px;color:#dfa21f;text-decoration:underline;text-decoration-color:rgba(215,155,30,.6);text-underline-offset:0.8px;">5.0</span>
<span class="t" style="left:1047.5px;top:258.55px;line-height:12px;font-size:6.77px;color:#d2d2d2;">per second</span>
<span class="t" style="left:990.5px;top:271.05px;line-height:12px;font-size:6.77px;color:#6a6a6a;">Magnitude:</span>
<span class="t" style="left:1028.5px;top:271.05px;line-height:12px;font-size:6.83px;color:#6a6a6a;">1.0</span>
<div style="left:1057px;top:280.8px;width:41px;height:9.4px;background:#3a3a3a;border:0.7px solid #2e2e2e;box-sizing:border-box;border-radius:1.5px;"></div>
<span class="t" style="left:1068.5px;top:279.95px;line-height:12px;font-size:7.0px;color:#6a6a6a;">Apply</span>
<div style="left:986px;top:296.4px;width:63px;height:10.8px;background:#383838;border-top:0.6px solid #5a5a5a;border-left:0.6px solid #4a4a4a;border-radius:2px 2px 0 0;box-sizing:border-box;"></div>
<span class="t" style="left:990.5px;top:296.45px;line-height:12px;font-size:6.54px;color:#d2d2d2;">Effects &amp; Presets</span>
<span class="t" style="left:1043px;top:296.25px;line-height:12px;font-size:7.5px;color:#d2d2d2;">×</span>
<svg style="left:1084px;top:299px;" width="10" height="6" viewBox="0 0 10 6"><path d="M0.5 1.5h3l-1.5 2z" fill="#bbb"/><rect x="4.2" y="0.5" width="4.6" height="4.6" fill="#9a9a9a"/></svg>
<div style="left:1096.6px;top:296.5px;width:0.8px;height:10px;background:#1e1e1e;"></div>
<div style="left:987.5px;top:310.2px;width:110.8px;height:9.2px;background:#8f8f8f;border-top:1px solid #1c1c1c;border-left:1px solid #1c1c1c;border-radius:1.5px;box-sizing:border-box;"></div>
<svg style="left:990px;top:311.4px;" width="12" height="8" viewBox="0 0 12 8"><circle cx="4.6" cy="3" r="2.1" fill="none" stroke="#222" stroke-width="0.8"/><path d="M3.2 4.6L1 7" stroke="#222" stroke-width="1"/><path d="M8.4 2.6h3l-1.5 2.2z" fill="#111"/></svg>
<span class="t" style="left:1008px;top:309.45px;line-height:12px;font-size:7.07px;color:#151515;-webkit-text-stroke:0;">vinny</span>
<div style="left:1090.6px;top:311.6px;width:6.6px;height:6.8px;background:#3a3a3a;border:0.6px solid #222;box-sizing:border-box;border-radius:1px;"></div>
<svg style="left:1091.9px;top:313px;" width="4" height="4" viewBox="0 0 4 4"><path d="M0.4 0.4l3.2 3.2M3.6 0.4L0.4 3.6" stroke="#eee" stroke-width="0.9"/></svg>
<div style="left:1091.8px;top:321.4px;width:0.8px;height:205.6px;background:#2a2a2a;"></div>
<div style="left:1092.6px;top:321.4px;width:10.4px;height:205.6px;background:#353535;"></div>
<svg style="left:1094.6px;top:325.4px;" width="6" height="4" viewBox="0 0 6 4"><path d="M0 3.6h5.4L2.7 0.2z" fill="#555"/></svg>
<svg style="left:1094.6px;top:519.6px;" width="6" height="4" viewBox="0 0 6 4"><path d="M0 0.2h5.4L2.7 3.6z" fill="#666"/></svg>
<div style="left:986px;top:321px;width:117px;height:0.7px;background:#2a2a2a;"></div>
<svg style="left:987.6px;top:325.2px;" width="4.6" height="4" viewBox="0 0 4.6 4"><path d="M0 0.2h4.4L2.2 3.6z" fill="#b4b4b4"/></svg>
<span class="t" style="left:993.5px;top:321.05px;line-height:12px;font-size:6.88px;color:#d6d6d6;">* Animation Presets</span>
<svg style="left:997.2px;top:335.2px;" width="4.6" height="4" viewBox="0 0 4.6 4"><path d="M0 0.2h4.4L2.2 3.6z" fill="#b4b4b4"/></svg>
<svg style="left:1004px;top:333.4px;" width="8" height="7" viewBox="0 0 8 7"><path d="M0.2 0.8h2.8l0.8 1h4v4.8H0.2z" fill="#d0d0d0"/></svg>
<span class="t" style="left:1014.5px;top:331.25px;line-height:12px;font-size:6.5px;color:#d6d6d6;letter-spacing:-0.005px;">User Presets</span>
<div style="left:986px;top:341.6px;width:105.8px;height:9.8px;background:#454545;"></div>
<svg style="left:1015px;top:342.6px;" width="8" height="8" viewBox="0 0 8 8"><path d="M0.4 0.4h4.6l2 2v5.2H0.4z" fill="#ddd"/><path d="M1.6 3.4h3.4M3.2 3.4v3M4.4 5l1.6 1.6" stroke="#222" stroke-width="0.8" fill="none"/></svg>
<div style="left:1023px;top:341.8px;width:22.2px;height:9.4px;background:#cdcdcd;"></div>
<span class="t" style="left:1024px;top:340.95px;line-height:12px;font-size:7.25px;color:#111;-webkit-text-stroke:0;">Vinny</span>
<div style="left:986px;top:527px;width:117px;height:0.7px;background:#242424;"></div>
<div style="left:1091.8px;top:527px;width:0.8px;height:9.7px;background:#242424;"></div>
<svg style="left:1081.4px;top:529.4px;" width="7" height="6.4" viewBox="0 0 7 6.4"><rect x="0.3" y="0.3" width="6" height="5.6" fill="#c8c8c8"/><rect x="2.6" y="2.2" width="3.7" height="3.7" fill="#555"/></svg>
<div style="left:986px;top:540.4px;width:27.8px;height:10.8px;background:#383838;border-top:0.6px solid #5a5a5a;border-left:0.6px solid #4a4a4a;border-radius:2px 2px 0 0;box-sizing:border-box;"></div>
<span class="t" style="left:990px;top:540.45px;line-height:12px;font-size:7.2px;color:#d2d2d2;">Align</span>
<span class="t" style="left:1009px;top:540.25px;line-height:12px;font-size:7.5px;color:#d2d2d2;">×</span>
<svg style="left:1084px;top:543px;" width="10" height="6" viewBox="0 0 10 6"><path d="M0.5 1.5h3l-1.5 2z" fill="#bbb"/><rect x="4.2" y="0.5" width="4.6" height="4.6" fill="#9a9a9a"/></svg>
<div style="left:1096.6px;top:540.5px;width:0.8px;height:10px;background:#1e1e1e;"></div>
<span class="t" style="left:987.5px;top:553.15px;line-height:12px;font-size:6.82px;color:#d2d2d2;">Align Layers to:</span>
<div style="left:1038px;top:554.4px;width:62px;height:9.4px;background:linear-gradient(180deg,#454545,#383838);border:0.7px solid #1e1e1e;box-sizing:border-box;border-radius:1.5px;"></div>
<span class="t" style="left:1042px;top:553.55px;line-height:12px;font-size:7.02px;color:#d2d2d2;">Composition</span>
<svg style="left:1092.6px;top:557.3000000000001px;" width="5" height="4" viewBox="0 0 5 4"><path d="M0.3 0.3h4.2L2.4 3.4z" fill="#d0d0d0"/></svg>
<div style="left:1089px;top:555.4px;width:0.6px;height:7.4px;background:#242424;"></div>
<svg style="left:991.0px;top:567.5px;" width="9" height="9" viewBox="0 0 9 9"><path d="M0.6 0v9" stroke="#d0d0d0" stroke-width="0.9"/><rect x="1.6" y="1" width="4.6" height="2.6" fill="#d0d0d0"/><rect x="1.6" y="5" width="7" height="2.6" fill="none" stroke="#d0d0d0" stroke-width="0.8"/></svg>
<svg style="left:1010.5px;top:567.5px;" width="9" height="9" viewBox="0 0 9 9"><path d="M4.5 0v9" stroke="#d0d0d0" stroke-width="0.8"/><rect x="2.4" y="1" width="4.2" height="2.6" fill="#d0d0d0"/><rect x="0.8" y="5" width="7.4" height="2.6" fill="none" stroke="#d0d0d0" stroke-width="0.8"/></svg>
<svg style="left:1029.5px;top:567.5px;" width="9" height="9" viewBox="0 0 9 9"><path d="M8.4 0v9" stroke="#d0d0d0" stroke-width="0.9"/><rect x="2.8" y="1" width="4.6" height="2.6" fill="#d0d0d0"/><rect x="0.4" y="5" width="7" height="2.6" fill="none" stroke="#d0d0d0" stroke-width="0.8"/></svg>
<svg style="left:1049.5px;top:567.5px;" width="9" height="9" viewBox="0 0 9 9"><path d="M0 0.8h9" stroke="#d0d0d0" stroke-width="0.9"/><rect x="1.2" y="1.8" width="2.6" height="5.4" fill="none" stroke="#d0d0d0" stroke-width="0.8"/><rect x="5.2" y="1.8" width="2.4" height="2.6" fill="#d0d0d0"/></svg>
<svg style="left:1069.0px;top:567.5px;" width="9" height="9" viewBox="0 0 9 9"><path d="M0 4.5h9" stroke="#d0d0d0" stroke-width="0.8"/><rect x="1.6" y="1.4" width="2.6" height="6" fill="none" stroke="#d0d0d0" stroke-width="0.8"/><rect x="5.4" y="3.2" width="2.4" height="2.6" fill="#d0d0d0"/></svg>
<svg style="left:1088.5px;top:567.5px;" width="9" height="9" viewBox="0 0 9 9"><path d="M0 8h9" stroke="#d0d0d0" stroke-width="0.9"/><rect x="1.2" y="1.6" width="2.6" height="5.4" fill="none" stroke="#d0d0d0" stroke-width="0.8"/><rect x="5.2" y="4.4" width="2.4" height="2.6" fill="#d0d0d0"/></svg>
<div style="left:987px;top:579.2px;width:113px;height:0.7px;background:#2a2a2a;"></div>
<span class="t" style="left:987.5px;top:580.75px;line-height:12px;font-size:6.88px;color:#d2d2d2;">Distribute Layers:</span>
<svg style="left:991.0px;top:592.8px;" width="9" height="8" viewBox="0 0 9 8"><path d="M0 1h9" stroke="#565656" stroke-width="0.7"/><rect x="2.4" y="0.8" width="4.2" height="2" fill="#565656"/><rect x="1" y="5" width="7" height="2" fill="none" stroke="#565656" stroke-width="0.7"/><path d="M0 4.6h9" stroke="#565656" stroke-width="0.6"/></svg>
<svg style="left:1010.5px;top:592.8px;" width="9" height="8" viewBox="0 0 9 8"><path d="M0 4h9" stroke="#565656" stroke-width="0.7"/><rect x="2.4" y="0.8" width="4.2" height="2" fill="#565656"/><rect x="1" y="5" width="7" height="2" fill="none" stroke="#565656" stroke-width="0.7"/><path d="M0 6.0h9" stroke="#565656" stroke-width="0.6"/></svg>
<svg style="left:1029.5px;top:592.8px;" width="9" height="8" viewBox="0 0 9 8"><path d="M0 7h9" stroke="#565656" stroke-width="0.7"/><rect x="2.4" y="0.8" width="4.2" height="2" fill="#565656"/><rect x="1" y="5" width="7" height="2" fill="none" stroke="#565656" stroke-width="0.7"/><path d="M0 7.3999999999999995h9" stroke="#565656" stroke-width="0.6"/></svg>
<svg style="left:1049.5px;top:592.8px;" width="9" height="8" viewBox="0 0 9 8"><path d="M1 0v8M5.0 0v8" stroke="#565656" stroke-width="0.7"/><rect x="1.6" y="2.4" width="2" height="3.6" fill="none" stroke="#565656" stroke-width="0.7"/><rect x="5.8" y="2.8" width="2" height="2.8" fill="#565656"/></svg>
<svg style="left:1069.0px;top:592.8px;" width="9" height="8" viewBox="0 0 9 8"><path d="M4 0v8M6.4 0v8" stroke="#565656" stroke-width="0.7"/><rect x="1.6" y="2.4" width="2" height="3.6" fill="none" stroke="#565656" stroke-width="0.7"/><rect x="5.8" y="2.8" width="2" height="2.8" fill="#565656"/></svg>
<svg style="left:1088.5px;top:592.8px;" width="9" height="8" viewBox="0 0 9 8"><path d="M7 0v8M7.8 0v8" stroke="#565656" stroke-width="0.7"/><rect x="1.6" y="2.4" width="2" height="3.6" fill="none" stroke="#565656" stroke-width="0.7"/><rect x="5.8" y="2.8" width="2" height="2.8" fill="#565656"/></svg>
<div style="left:3px;top:24px;width:1.6px;height:11px;background:#555;"></div>
<div style="left:7px;top:23px;width:13.2px;height:12.2px;background:#222;border:0.6px solid #141414;box-sizing:border-box;"></div>
<svg style="left:11px;top:24.5px;" width="6" height="9" viewBox="0 0 6 9"><path d="M0.5 0.3v7l1.7-1.6 1.2 2.7 1-0.5-1.2-2.6h2.2z" fill="#e4e4e4"/></svg>
<svg style="left:23px;top:24px;" width="10" height="10" viewBox="0 0 10 10"><path d="M2.2 9.5C1.2 8 0.3 6.6 0.4 5.6c0.5-0.5 1.3 0 1.9 1V1.8c0-0.8 1.2-0.8 1.2 0V0.9c0-0.8 1.3-0.8 1.3 0v0.6c0-0.8 1.3-0.8 1.3 0.1v0.8c0-0.8 1.2-0.7 1.2 0.1v4.2c0 1.2-0.5 2-0.9 2.8z" fill="#d0d0d0"/></svg>
<svg style="left:38px;top:24px;" width="10" height="10" viewBox="0 0 10 10"><circle cx="3.6" cy="3.6" r="2.7" fill="none" stroke="#d0d0d0" stroke-width="1.2"/><path d="M5.6 5.6L9 9" stroke="#d0d0d0" stroke-width="1.6"/></svg>
<div style="left:51.3px;top:24px;width:0.7px;height:11px;background:#262626;"></div>
<svg style="left:57px;top:24.5px;" width="9" height="9" viewBox="0 0 9 9"><path d="M1.6 2.4A3.4 3.4 0 1 1 1 5.6" fill="none" stroke="#8a8a8a" stroke-width="0.9"/><path d="M0.2 1.2l2.6 0.2-1.2 2.2z" fill="#8a8a8a"/></svg>
<svg style="left:71px;top:24.5px;" width="10" height="10" viewBox="0 0 10 10"><circle cx="4" cy="4" r="3" fill="none" stroke="#9a9a9a" stroke-width="0.9"/><circle cx="4.4" cy="4.4" r="1.5" fill="#ddd"/><rect x="8.2" y="8" width="1.2" height="1.2" fill="#bbb"/></svg>
<svg style="left:85px;top:25px;" width="10" height="8" viewBox="0 0 10 8"><rect x="0.8" y="0.8" width="8" height="6" fill="none" stroke="#c8c8c8" stroke-width="1.1" stroke-dasharray="1.6 1.2"/><circle cx="4.8" cy="3.8" r="1.5" fill="none" stroke="#c8c8c8" stroke-width="0.8"/></svg>
<div style="left:98px;top:24px;width:0.7px;height:11px;background:#262626;"></div>
<svg style="left:103.5px;top:24.5px;" width="10" height="10" viewBox="0 0 10 10"><path d="M2.3 0.6h3.8l2 3.3-2 3.3H2.3l-2-3.3z" fill="#b8b8b8"/><rect x="8.4" y="8" width="1.1" height="1.1" fill="#bbb"/></svg>
<svg style="left:120px;top:24.5px;" width="8" height="10" viewBox="0 0 8 10"><path d="M1.4 0.6v6.6M1.4 0.6L5.4 6.4" stroke="#8a8a8a" stroke-width="0.8" fill="none"/><rect x="6.6" y="8" width="1.1" height="1.1" fill="#bbb"/></svg>
<span class="t" style="left:132.4px;top:23.05px;line-height:12px;font-size:12px;color:#b4b4b4;font-family:'Liberation Serif',serif;-webkit-text-stroke:0;">T</span>
<div style="left:141.2px;top:32.6px;width:1.1px;height:1.1px;background:#bbb;"></div>
<div style="left:145.3px;top:24px;width:0.7px;height:11px;background:#262626;"></div>
<svg style="left:151.5px;top:24px;" width="10" height="10" viewBox="0 0 10 10"><path d="M8.6 0.6L3.4 6.2" stroke="#e0e0e0" stroke-width="1.3"/><path d="M3.4 6.2L1 9" stroke="#aaa" stroke-width="1.8"/></svg>
<svg style="left:165px;top:24px;" width="9" height="10" viewBox="0 0 9 10"><circle cx="4.4" cy="1.6" r="1.4" fill="#ddd"/><path d="M3.2 3h2.4v2h2.8v4H0.4V5h2.8z" fill="#ddd"/><rect x="2.2" y="6.4" width="4.4" height="1.4" fill="#333"/></svg>
<svg style="left:179.5px;top:25px;" width="10" height="8" viewBox="0 0 10 8"><path d="M3.6 0.8h5.6L6 5.8H0.4z" fill="#e8e8e8"/><path d="M0.4 5.8H6v1.4H0.4z" fill="#aaa"/></svg>
<div style="left:192.3px;top:24px;width:0.7px;height:11px;background:#262626;"></div>
<svg style="left:196.5px;top:24px;" width="11" height="10" viewBox="0 0 11 10"><path d="M3.4 0.6l1 1.6-1.6 1.4 1.4 2L2.6 9" stroke="#9a9a9a" stroke-width="1.3" fill="none"/><path d="M9.4 0.6L4.6 6.6" stroke="#ccc" stroke-width="1.1"/><rect x="9.4" y="8" width="1.1" height="1.1" fill="#bbb"/></svg>
<div style="left:210.3px;top:24px;width:0.7px;height:11px;background:#262626;"></div>
<svg style="left:215.5px;top:24px;" width="11" height="10" viewBox="0 0 11 10"><path d="M5.6 0.6l3.2 3-1.2 0.4-1.4 1.6-0.2 1.6-3.6-3.4 1.7-0.2 1.4-1.5z" fill="#d8d8d8"/><path d="M4 5.4L1 8.6" stroke="#bbb" stroke-width="0.9"/><rect x="9.4" y="8" width="1.1" height="1.1" fill="#bbb"/></svg>
<svg style="left:255.5px;top:26px;" width="7" height="7" viewBox="0 0 7 7"><circle cx="3.2" cy="3.2" r="2.5" fill="none" stroke="#505050" stroke-width="0.8"/><path d="M3.2 0v6.4M0 3.2h6.4" stroke="#505050" stroke-width="0.6"/></svg>
<svg style="left:265.5px;top:26.5px;" width="6" height="6" viewBox="0 0 6 6"><circle cx="2.8" cy="2.8" r="2.2" fill="#505050"/></svg>
<svg style="left:273.5px;top:26px;" width="7" height="7" viewBox="0 0 7 7"><path d="M1 0.4v6M5 0.4v6M1 3.4h4" stroke="#4c4c4c" stroke-width="1" fill="none"/></svg>
<div style="left:284.3px;top:24px;width:0.7px;height:11px;background:#262626;"></div>
<div style="left:289px;top:25.5px;width:7px;height:7px;background:#404040;border:0.6px solid #2a2a2a;box-sizing:border-box;"></div>
<span class="t" style="left:298.5px;top:24.05px;line-height:12px;font-size:6.7px;color:#c8c8c8;">Snapping</span>
<svg style="left:331.5px;top:25.5px;" width="8" height="8" viewBox="0 0 8 8"><path d="M0.6 7L3.4 3.8L5 5.6M3.4 3.8L6.8 0.8" stroke="#ccc" stroke-width="0.8" fill="none"/><circle cx="6.8" cy="0.9" r="0.9" fill="#ddd"/></svg>
<div style="left:343.6px;top:23px;width:12px;height:12.2px;background:#202020;border-radius:1.5px;"></div>
<svg style="left:346px;top:25.5px;" width="7.2" height="7.2" viewBox="0 0 7.2 7.2"><path d="M0.4 2V0.4H2M5.2 0.4H6.8V2M6.8 5.2V6.8H5.2M2 6.8H0.4V5.2" stroke="#bbb" stroke-width="0.8" fill="none"/><rect x="2.6" y="2.6" width="2" height="2" fill="none" stroke="#aaa" stroke-width="0.6"/></svg>
<div style="left:362.3px;top:24px;width:0.7px;height:11px;background:#262626;"></div>
<span class="t" style="left:368.5px;top:24.05px;line-height:12px;font-size:5.91px;color:#dfa21f;font-weight:bold;text-decoration:underline;text-decoration-color:rgba(215,155,30,.6);text-underline-offset:0.8px;">Fill:</span>
<div style="left:381px;top:25.2px;width:12px;height:8px;background:#fff;border:0.6px solid #888;box-sizing:border-box;"></div>
<span class="t" style="left:400.5px;top:24.05px;line-height:12px;font-size:6.24px;color:#dfa21f;font-weight:bold;text-decoration:underline;text-decoration-color:rgba(215,155,30,.6);text-underline-offset:0.8px;">Stroke:</span>
<div style="left:424px;top:25.2px;width:11.6px;height:8px;background:#3a3a3a;border:0.7px solid #7a7a7a;box-sizing:border-box;"></div>
<svg style="left:424px;top:25.2px;" width="11.6" height="8" viewBox="0 0 11.6 8"><path d="M1 7L10.6 1" stroke="#d02020" stroke-width="0.9"/></svg>
<span class="t" style="left:443px;top:24.05px;line-height:12px;font-size:7.5px;color:#dfa21f;text-decoration:underline;text-decoration-color:rgba(215,155,30,.6);text-underline-offset:0.8px;">–</span>
<span class="t" style="left:448.5px;top:24.05px;line-height:12px;font-size:7.1px;color:#c8c8c8;">px</span>
<span class="t" style="left:472px;top:24.05px;line-height:12px;font-size:6.81px;color:#c8c8c8;">Add:</span>
<svg style="left:488px;top:26.6px;" width="7" height="7" viewBox="0 0 7 7"><circle cx="3.2" cy="3.2" r="3" fill="#dcdcdc"/><path d="M2.3 1.6v3.2l2.6-1.6z" fill="#333"/></svg>
<svg style="left:849px;top:25px;" width="12" height="8.5" viewBox="0 0 12 8.5"><rect x="0.3" y="0.8" width="10" height="5.6" rx="1" fill="#d4d4d4"/><circle cx="3" cy="3.6" r="1.4" fill="#333"/><circle cx="7.2" cy="3.6" r="1.4" fill="#333"/><rect x="10.4" y="7" width="1.1" height="1.1" fill="#bbb"/></svg>
<span class="t" style="left:867px;top:24.05px;line-height:12px;font-size:6.71px;color:#c8c8c8;">Workspace:</span>
<div style="left:907px;top:24.3px;width:78px;height:11px;background:linear-gradient(180deg,#444,#383838);border:0.7px solid #222;box-sizing:border-box;border-radius:1.5px;"></div>
<span class="t" style="left:910px;top:24.05px;line-height:12px;font-size:7.04px;color:#c8c8c8;">Animation</span>
<svg style="left:977px;top:28px;" width="5" height="4" viewBox="0 0 5 4"><path d="M0.3 0.3h4.2L2.4 3.2z" fill="#c8c8c8"/></svg>
<div style="left:989.8px;top:24.6px;width:109.5px;height:10.4px;background:#8b8b8b;border-top:1px solid #1c1c1c;border-left:1px solid #1c1c1c;box-sizing:border-box;border-radius:1.5px;"></div>
<svg style="left:992px;top:26px;" width="8" height="8" viewBox="0 0 8 8"><circle cx="4.6" cy="3" r="2.1" fill="none" stroke="#222" stroke-width="0.8"/><path d="M3.2 4.6L1 7" stroke="#222" stroke-width="1"/></svg>
<span class="t" style="left:1002px;top:24.45px;line-height:12px;font-size:6.63px;color:#1c1c1c;-webkit-text-stroke:0;">Search Help</span>
</div></body></html>
